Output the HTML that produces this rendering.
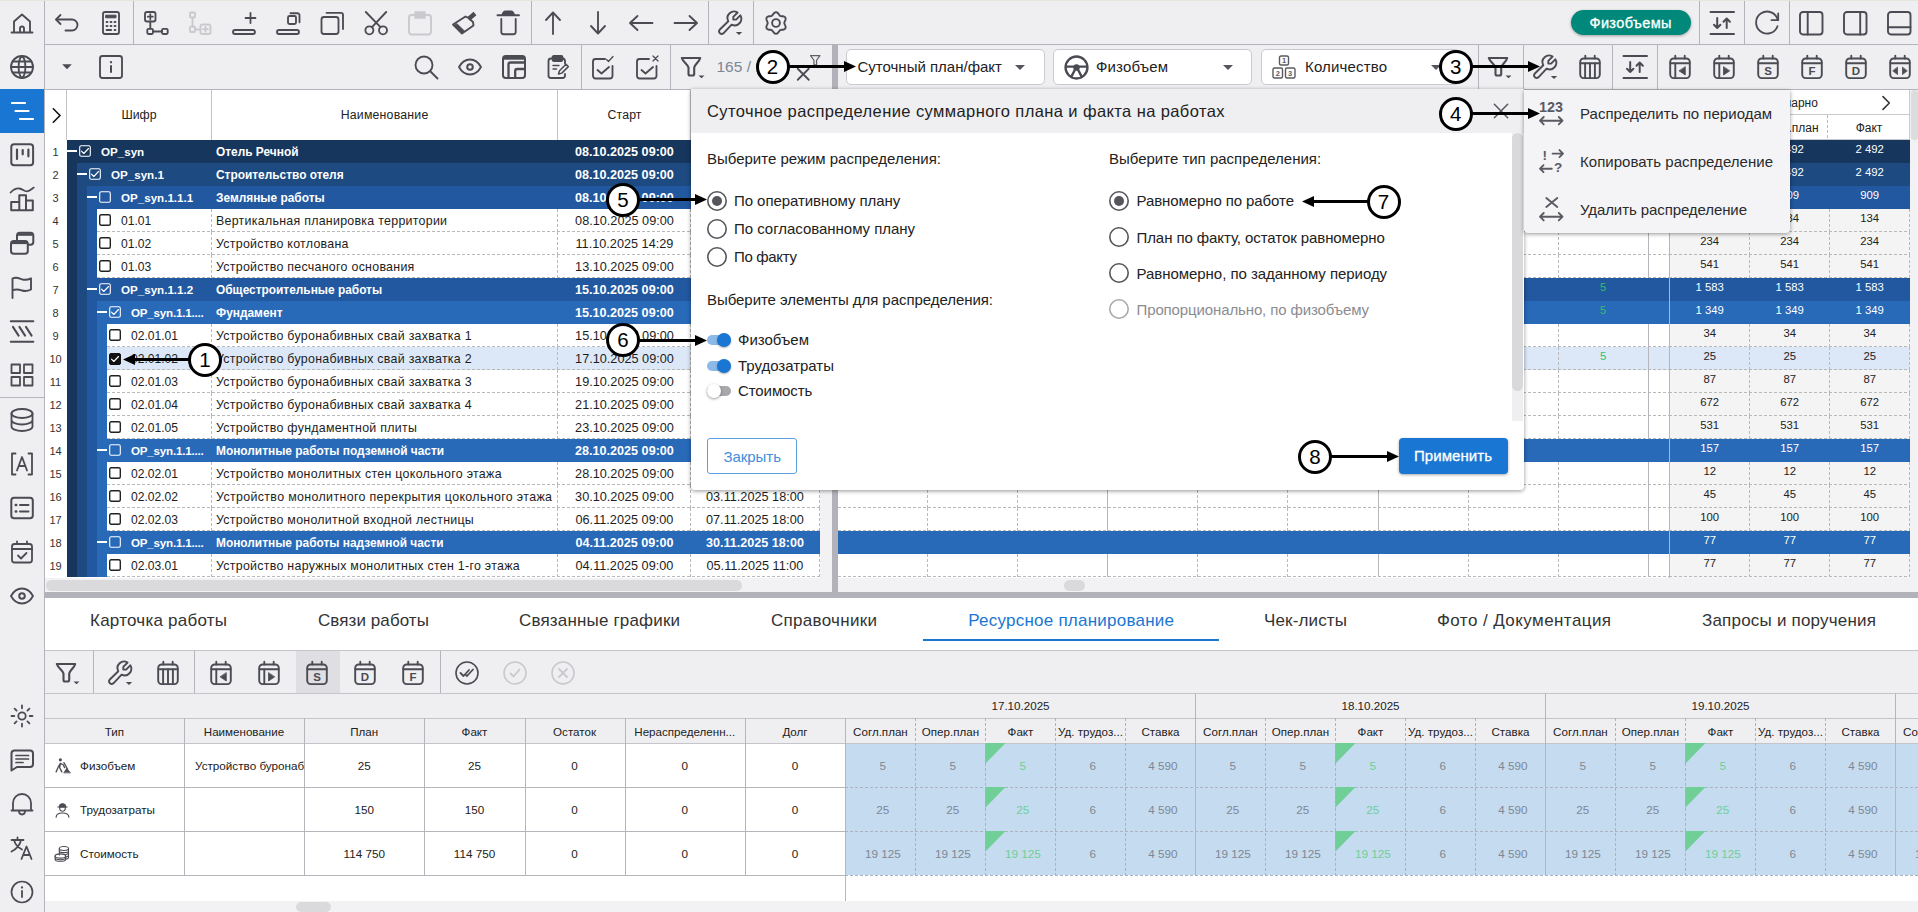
<!DOCTYPE html><html><head><meta charset="utf-8"><title>UI</title><style>
html,body{margin:0;padding:0}
body{width:1918px;height:912px;overflow:hidden;position:relative;background:#efeff2;font-family:"Liberation Sans",sans-serif;}
.t{position:absolute;white-space:nowrap;}
.b{position:absolute;box-sizing:border-box;}
.i{position:absolute;overflow:visible;}
.circ{position:absolute;box-sizing:border-box;width:34px;height:34px;border:3px solid #000;border-radius:50%;background:#fff;color:#000;font-size:20.5px;line-height:28px;text-align:center;}
</style></head><body>
<div class="b" style="left:0px;top:0px;width:1918px;height:1px;background:#e3e8dc;"></div>
<div class="b" style="left:0px;top:1px;width:44px;height:911px;background:#efeff2;"></div>
<div class="b" style="left:44px;top:1px;width:1px;height:911px;background:#b4b4bc;"></div>
<div class="b" style="left:0px;top:89px;width:44px;height:44px;background:#1976d2;"></div>
<svg class="i" style="left:10.0px;top:11.0px;" width="24" height="24" viewBox="0 0 24 24" fill="none" stroke="#4b4b53" stroke-width="1.85" stroke-linecap="round" stroke-linejoin="round"><path d="M1.5 21.5h21M4 21V10.5L12 3.5l8 7V21"/><path d="M10 21v-3.5a2 2 0 0 1 4 0V21"/></svg>
<svg class="i" style="left:10.0px;top:55.0px;" width="24" height="24" viewBox="0 0 24 24" fill="none" stroke="#4b4b53" stroke-width="1.85" stroke-linecap="round" stroke-linejoin="round"><circle cx="12" cy="12" r="11"/><path d="M1 12h22M2.800 6.500h18.400M2.800 17.500h18.400M12 1c-4.500 3.500-4.500 18.500 0 22M12 1c4.500 3.500 4.500 18.500 0 22"/></svg>
<svg class="i" style="left:10.0px;top:99.0px;" width="24" height="24" viewBox="0 0 24 24" fill="none" stroke="#fff" stroke-width="1.85" stroke-linecap="round" stroke-linejoin="round"><path d="M2 4h13M5.500 12h13M10 20h13" stroke-width="2.200"/></svg>
<svg class="i" style="left:10.0px;top:143.0px;" width="24" height="24" viewBox="0 0 24 24" fill="none" stroke="#4b4b53" stroke-width="1.85" stroke-linecap="round" stroke-linejoin="round"><rect x="1.300" y="1.300" width="21.800" height="21" rx="2.800" stroke-width="2"/><path d="M7 6.500v9.500M12.700 7v4.300M18.400 6.500v6.800" stroke-width="2.200"/></svg>
<svg class="i" style="left:10.0px;top:187.0px;" width="24" height="24" viewBox="0 0 24 24" fill="none" stroke="#4b4b53" stroke-width="1.85" stroke-linecap="round" stroke-linejoin="round"><path d="M1.200 23.200V14.900H9.300V23.200M9.300 14.900V8.200H16V23.200M16 13.600H22.800V23.200M1.200 23.200H22.800" stroke-width="2"/><path d="M.600 5.500C3 3 6 1.200 9.300 1.500S14 4.500 17 4.300 21.500 2 23.800 .600" stroke-width="1.800"/></svg>
<svg class="i" style="left:10.0px;top:231.0px;" width="24" height="24" viewBox="0 0 24 24" fill="none" stroke="#4b4b53" stroke-width="1.85" stroke-linecap="round" stroke-linejoin="round"><rect x="1" y="10" width="16.800" height="12.800" rx="2.800" stroke-width="2"/><path d="M2 11.800h15" stroke-width="2.600" stroke-linecap="butt"/><path d="M7 9.500V4.500a2.800 2.800 0 0 1 2.800-2.800h10.700a2.800 2.800 0 0 1 2.800 2.800v6.400a2.800 2.800 0 0 1-2.800 2.800H18.500" stroke-width="2"/><path d="M8 3.500h14.500" stroke-width="2.600" stroke-linecap="butt"/></svg>
<svg class="i" style="left:10.0px;top:275.0px;" width="24" height="24" viewBox="0 0 24 24" fill="none" stroke="#4b4b53" stroke-width="1.85" stroke-linecap="round" stroke-linejoin="round"><path d="M2.500 23V3.500c4-2 7 0 9.500.800s6 .500 9-1V14.500c-3 1.500-6 2-9 1s-5.500-2-9.500 0" stroke-width="1.900"/></svg>
<svg class="i" style="left:10.0px;top:319.0px;" width="24" height="24" viewBox="0 0 24 24" fill="none" stroke="#4b4b53" stroke-width="1.85" stroke-linecap="round" stroke-linejoin="round"><path d="M.800 2.200h22.500M.800 22.800h22.500" stroke-width="2.100"/><path d="M3 8l5.500 8.500M9.500 8l5.500 8.500M16 8l5.500 8.500" stroke-width="2.200"/></svg>
<svg class="i" style="left:10.0px;top:363.0px;" width="24" height="24" viewBox="0 0 24 24" fill="none" stroke="#4b4b53" stroke-width="1.85" stroke-linecap="round" stroke-linejoin="round"><rect x="1.500" y="1.500" width="8.500" height="8.500" stroke-width="1.800"/><rect x="14" y="1.500" width="8.500" height="8.500" stroke-width="1.800"/><rect x="1.500" y="14" width="8.500" height="8.500" stroke-width="1.800"/><rect x="14" y="14" width="8.500" height="8.500" stroke-width="1.800"/></svg>
<svg class="i" style="left:10.0px;top:408.0px;" width="24" height="24" viewBox="0 0 24 24" fill="none" stroke="#4b4b53" stroke-width="1.85" stroke-linecap="round" stroke-linejoin="round"><ellipse cx="12" cy="5.500" rx="10.500" ry="4.500" stroke-width="1.800"/><path d="M1.500 5.500v13c0 2.500 4.700 4.500 10.500 4.500s10.500-2 10.500-4.500v-13M1.500 12c0 2.500 4.700 4.500 10.500 4.500s10.500-2 10.500-4.500" stroke-width="1.800"/></svg>
<svg class="i" style="left:10.0px;top:452.0px;" width="24" height="24" viewBox="0 0 24 24" fill="none" stroke="#4b4b53" stroke-width="1.85" stroke-linecap="round" stroke-linejoin="round"><path d="M5.500 1.500H2v21h3.500M18.500 1.500H22v21h-3.500" stroke-width="1.800"/><path d="M7 18.500L12 5l5 13.500M8.800 14h6.400" stroke-width="1.800"/></svg>
<svg class="i" style="left:10.0px;top:496.0px;" width="24" height="24" viewBox="0 0 24 24" fill="none" stroke="#4b4b53" stroke-width="1.85" stroke-linecap="round" stroke-linejoin="round"><rect x="1.300" y="1.800" width="21.500" height="20.500" rx="2.800" stroke-width="2"/><path d="M10 9h8.500M10 15.500h8.500" stroke-width="2"/><path d="M5.800 9h.400M5.800 15.500h.400" stroke-width="2.600"/></svg>
<svg class="i" style="left:10.0px;top:540.0px;" width="24" height="24" viewBox="0 0 24 24" fill="none" stroke="#4b4b53" stroke-width="1.85" stroke-linecap="round" stroke-linejoin="round"><rect x="2" y="4" width="20" height="18.500" rx="2.500" stroke-width="1.800"/><path d="M2 9h20M7 1.500V4M17 1.500V4" stroke-width="1.800"/><path d="M8 15.500l3 3 5.500-5.500" stroke-width="1.800"/></svg>
<svg class="i" style="left:10.0px;top:584.0px;" width="24" height="24" viewBox="0 0 24 24" fill="none" stroke="#4b4b53" stroke-width="1.85" stroke-linecap="round" stroke-linejoin="round"><path d="M1 12C4 6.500 8 4.500 12 4.500S20 6.500 23 12c-3 5.500-7 7.500-11 7.500S4 17.500 1 12z"/><circle cx="12" cy="12" r="2.800" stroke-width="2"/></svg>
<svg class="i" style="left:10.0px;top:704.0px;" width="24" height="24" viewBox="0 0 24 24" fill="none" stroke="#4b4b53" stroke-width="1.85" stroke-linecap="round" stroke-linejoin="round"><circle cx="12" cy="12" r="3.700" stroke-width="1.800"/><path d="M12 1.500v2.800M12 19.700v2.800M1.500 12h2.800M19.700 12h2.800M4.600 4.600l2 2M17.400 17.400l2 2M19.400 4.600l-2 2M6.600 17.400l-2 2" stroke-width="1.800"/></svg>
<svg class="i" style="left:10.0px;top:748.0px;" width="24" height="24" viewBox="0 0 24 24" fill="none" stroke="#4b4b53" stroke-width="1.85" stroke-linecap="round" stroke-linejoin="round"><path d="M4 2.500h16a3 3 0 0 1 3 3V16a3 3 0 0 1-3 3H7L1.500 22.500V5.500a3 3 0 0 1 2.500-3z" stroke-width="2"/><path d="M6 7.500h12.500M6 11h12.500M6 14.500h7" stroke-width="1.700"/></svg>
<svg class="i" style="left:10.0px;top:792.0px;" width="24" height="24" viewBox="0 0 24 24" fill="none" stroke="#4b4b53" stroke-width="1.85" stroke-linecap="round" stroke-linejoin="round"><path d="M3 18.500V11a9 9 0 0 1 18 0v7.500zM1.500 18.500h21M9 19c0 2 1.300 3.500 3 3.500s3-1.500 3-3.500" stroke-width="1.800"/></svg>
<svg class="i" style="left:10.0px;top:836.0px;" width="24" height="24" viewBox="0 0 24 24" fill="none" stroke="#4b4b53" stroke-width="1.85" stroke-linecap="round" stroke-linejoin="round"><path d="M1.500 4h12M7.500 1.500V4M11 4c-1 5-4.500 9-9.500 11.500M4 4c1 4 4 7.500 8 9.500" stroke-width="1.800"/><path d="M11.500 23l5-12.500 5 12.500M13.300 19h6.400" stroke-width="1.800"/></svg>
<svg class="i" style="left:10.0px;top:880.0px;" width="24" height="24" viewBox="0 0 24 24" fill="none" stroke="#4b4b53" stroke-width="1.85" stroke-linecap="round" stroke-linejoin="round"><circle cx="12" cy="12" r="10.500" stroke-width="1.700"/><path d="M12 11v6" stroke-width="1.800"/><path d="M12 7.300v.3" stroke-width="2.200"/></svg>
<div class="b" style="left:0px;top:397px;width:44px;height:1px;background:#b4b4bc;"></div>
<div class="b" style="left:45px;top:44px;width:1873px;height:1px;background:#b4b4bc;"></div>
<div class="b" style="left:45px;top:89px;width:1873px;height:1px;background:#b4b4bc;"></div>
<svg class="i" style="left:55.0px;top:11.0px;" width="24" height="24" viewBox="0 0 24 24" fill="none" stroke="#4b4b53" stroke-width="1.85" stroke-linecap="round" stroke-linejoin="round"><path d="M5.500 4L1 8.500l4.500 4.500"/><path d="M1.500 8.500h15.500a5.500 5.500 0 0 1 0 11h-6.500"/></svg>
<svg class="i" style="left:99.0px;top:11.0px;" width="24" height="24" viewBox="0 0 24 24" fill="none" stroke="#4b4b53" stroke-width="1.85" stroke-linecap="round" stroke-linejoin="round"><rect x="4" y="1" width="16" height="22" rx="2"/><rect x="7" y="4.2" width="10" height="2.6" fill="#4b4b53" stroke-width="1"/><path d="M7.6 11h.8M11.6 11h.8M15.6 11h.8M7.6 15h.8M11.6 15h.8M15.6 15h.8M7.6 19h4.5M15.6 19h.8" stroke-width="2"/></svg>
<svg class="i" style="left:143.5px;top:11.0px;" width="24" height="24" viewBox="0 0 24 24" fill="none" stroke="#4b4b53" stroke-width="1.85" stroke-linecap="round" stroke-linejoin="round"><rect x="1" y="1" width="10.500" height="9.500" rx="2"/><path d="M3.800 5.700h5M6.300 3.200v5" stroke-width="1.800"/><path d="M6.300 10.500v7M9 20.500h9"/><rect x="3.300" y="17.800" width="5.700" height="5.200" rx="1.200"/><rect x="18" y="17.800" width="5.700" height="5.200" rx="1.200"/></svg>
<svg class="i" style="left:188.0px;top:11.0px;" width="24" height="24" viewBox="0 0 24 24" fill="none" stroke="#c9c9ce" stroke-width="1.85" stroke-linecap="round" stroke-linejoin="round"><rect x="2" y="1.5" width="5" height="5" rx="1"/><path d="M4.5 6.5v9M7 18.5h5"/><rect x="2" y="15.5" width="5" height="5.5" rx="1"/><rect x="12.5" y="13.5" width="10" height="9.5" rx="2"/><path d="M15 18.2h5M17.5 15.7v5" stroke-width="1.8"/></svg>
<svg class="i" style="left:232.0px;top:11.0px;" width="24" height="24" viewBox="0 0 24 24" fill="none" stroke="#4b4b53" stroke-width="1.85" stroke-linecap="round" stroke-linejoin="round"><rect x="1" y="19" width="22" height="4" rx="2"/><path d="M13.5 7h10M18.5 2v10" stroke-width="1.8"/></svg>
<svg class="i" style="left:276.0px;top:11.0px;" width="24" height="24" viewBox="0 0 24 24" fill="none" stroke="#4b4b53" stroke-width="1.85" stroke-linecap="round" stroke-linejoin="round"><rect x="1" y="19" width="22" height="4" rx="2"/><rect x="12" y="5" width="8" height="8" rx="1.5"/><path d="M14.5 2.2h7a2 2 0 0 1 2 2v7"/></svg>
<svg class="i" style="left:320.0px;top:11.0px;" width="24" height="24" viewBox="0 0 24 24" fill="none" stroke="#4b4b53" stroke-width="1.85" stroke-linecap="round" stroke-linejoin="round"><rect x="1.5" y="6" width="17" height="17" rx="2.5"/><path d="M6.5 1.8H21a2 2 0 0 1 2 2V18"/></svg>
<svg class="i" style="left:364.0px;top:11.0px;" width="24" height="24" viewBox="0 0 24 24" fill="none" stroke="#4b4b53" stroke-width="1.85" stroke-linecap="round" stroke-linejoin="round"><circle cx="5.400" cy="19.300" r="4"/><circle cx="19" cy="19.300" r="4"/><path d="M1.800 1L16.500 16.200M22.200 1L8 16.200"/></svg>
<svg class="i" style="left:408.0px;top:11.0px;" width="24" height="24" viewBox="0 0 24 24" fill="none" stroke="#c9c9ce" stroke-width="1.85" stroke-linecap="round" stroke-linejoin="round"><path d="M7 4H3.500a2.500 2.500 0 0 0-2.500 2.500V21a2.500 2.500 0 0 0 2.500 2.500h17A2.500 2.500 0 0 0 23 21V6.500A2.500 2.500 0 0 0 20.500 4H17"/><rect x="6.300" y=".300" width="11.400" height="7.400" fill="#c9c9ce" stroke="none"/></svg>
<svg class="i" style="left:452.0px;top:11.0px;" width="24" height="24" viewBox="0 0 24 24" fill="none" stroke="#4b4b53" stroke-width="1.85" stroke-linecap="round" stroke-linejoin="round"><path d="M13.500 5.500L1 13.500l9 9 11.500-8-.500-3.500-4.500-4z"/><path d="M16.500 8l6.500-5.500" stroke-width="4.400" stroke-linecap="butt"/><path d="M2.200 14.800l7.300 7.300 3-2-7.500-7.300z" fill="#4b4b53" stroke-width="1"/></svg>
<svg class="i" style="left:496.0px;top:11.0px;" width="24" height="24" viewBox="0 0 24 24" fill="none" stroke="#4b4b53" stroke-width="1.85" stroke-linecap="round" stroke-linejoin="round"><path d="M1.500 4.200h21.500"/><path d="M6.500 4c0-2 1.500-3.500 3-3.500h5.500c1.500 0 3 1.500 3 3.500z" fill="#4b4b53"/><path d="M5.300 8v13a2.200 2.200 0 0 0 2.200 2.200h10a2.200 2.200 0 0 0 2.200-2.200V8"/></svg>
<svg class="i" style="left:541.0px;top:11.0px;" width="24" height="24" viewBox="0 0 24 24" fill="none" stroke="#4b4b53" stroke-width="1.85" stroke-linecap="round" stroke-linejoin="round"><path d="M12 23V2M5 9l7-7.5L19 9"/></svg>
<svg class="i" style="left:585.5px;top:11.0px;" width="24" height="24" viewBox="0 0 24 24" fill="none" stroke="#4b4b53" stroke-width="1.85" stroke-linecap="round" stroke-linejoin="round"><path d="M12 1v21M5 15l7 7.5 7-7.5"/></svg>
<svg class="i" style="left:629.0px;top:11.0px;" width="24" height="24" viewBox="0 0 24 24" fill="none" stroke="#4b4b53" stroke-width="1.85" stroke-linecap="round" stroke-linejoin="round"><path d="M23.5 12H1.5M8.5 5L1 12l7.5 7"/></svg>
<svg class="i" style="left:673.5px;top:11.0px;" width="24" height="24" viewBox="0 0 24 24" fill="none" stroke="#4b4b53" stroke-width="1.85" stroke-linecap="round" stroke-linejoin="round"><path d="M0.5 12h22M15.5 5l7.5 7-7.5 7"/></svg>
<svg class="i" style="left:718.0px;top:11.0px;" width="24" height="24" viewBox="0 0 24 24" fill="none" stroke="#4b4b53" stroke-width="1.85" stroke-linecap="round" stroke-linejoin="round"><path d="M19.600 1.500L15.300 5.800V8.600H18.100L22.300 4.300A6.600 6.600 0 0 1 13.600 13.600L5.400 22.300A2.600 2.600 0 0 1 1.600 18.800L10.300 10.200A6.600 6.600 0 0 1 19.600 1.500Z" stroke-width="1.900"/><path d="M17.800 21h6.400l-3.200 2.900z" fill="#4b4b53" stroke="none"/></svg>
<svg class="i" style="left:763.5px;top:11.0px;" width="24" height="24" viewBox="0 0 24 24" fill="none" stroke="#4b4b53" stroke-width="1.85" stroke-linecap="round" stroke-linejoin="round"><circle cx="12" cy="12" r="3.900" stroke-width="1.900"/><path d="M12.0 1.2L12.9 1.4L13.8 2.0L14.5 2.8L15.1 3.6L15.6 4.3L16.1 4.8L16.9 5.1L17.7 5.2L18.8 5.2L19.8 5.5L20.7 5.9L21.4 6.6L21.6 7.5L21.6 8.5L21.2 9.5L20.8 10.5L20.4 11.3L20.3 12.0L20.4 12.7L20.8 13.5L21.2 14.5L21.6 15.5L21.6 16.5L21.4 17.4L20.7 18.1L19.8 18.5L18.8 18.8L17.7 18.8L16.9 18.9L16.1 19.2L15.6 19.7L15.1 20.4L14.5 21.2L13.8 22.0L12.9 22.6L12.0 22.8L11.1 22.6L10.2 22.0L9.5 21.2L8.9 20.4L8.4 19.7L7.8 19.2L7.1 18.9L6.3 18.8L5.2 18.8L4.2 18.5L3.3 18.1L2.6 17.4L2.4 16.5L2.4 15.5L2.8 14.5L3.2 13.5L3.6 12.7L3.7 12.0L3.6 11.3L3.2 10.5L2.8 9.5L2.4 8.5L2.4 7.5L2.6 6.6L3.3 5.9L4.2 5.5L5.2 5.2L6.3 5.2L7.1 5.1L7.8 4.8L8.4 4.3L8.9 3.6L9.5 2.8L10.2 2.0L11.1 1.4Z" stroke-width="1.900"/></svg>
<div class="b" style="left:133px;top:1px;width:1px;height:43px;background:#b4b4bc;"></div>
<div class="b" style="left:531px;top:1px;width:1px;height:43px;background:#b4b4bc;"></div>
<div class="b" style="left:708px;top:1px;width:1px;height:43px;background:#b4b4bc;"></div>
<div class="b" style="left:753px;top:1px;width:1px;height:43px;background:#b4b4bc;"></div>
<div class="b" style="left:1571px;top:10px;width:120px;height:25px;background:#00897b;border-radius:13px;box-shadow:0 1px 3px rgba(0,0,0,.35);"></div>
<div class="t" style="left:1589.5px;top:12.5px;font-size:14.5px;line-height:20px;color:#fff;letter-spacing:0.37px;-webkit-text-stroke:0.300px #fff;">Физобъемы</div>
<div class="b" style="left:1699px;top:1px;width:1px;height:43px;background:#b4b4bc;"></div>
<div class="b" style="left:1744px;top:1px;width:1px;height:43px;background:#b4b4bc;"></div>
<div class="b" style="left:1789px;top:1px;width:1px;height:43px;background:#b4b4bc;"></div>
<svg class="i" style="left:1710.0px;top:11.0px;" width="24" height="24" viewBox="0 0 24 24" fill="none" stroke="#4b4b53" stroke-width="1.85" stroke-linecap="round" stroke-linejoin="round"><path d="M0.500 1h23.500M0.500 23h23.500" stroke-width="2"/><path d="M7.200 7v10M4 13.800l3.200 3.200 3.200-3.200M16.700 17V7.500M13.500 10.700l3.200-3.200 3.200 3.200" stroke-width="2"/></svg>
<svg class="i" style="left:1755.0px;top:11.0px;" width="24" height="24" viewBox="0 0 24 24" fill="none" stroke="#4b4b53" stroke-width="1.85" stroke-linecap="round" stroke-linejoin="round"><path d="M22.500 15.200A11 11 0 1 1 22.800 9" stroke-width="1.800"/><path d="M23.200 2.500v6.700h-6.700" stroke-width="1.800"/></svg>
<svg class="i" style="left:1799.0px;top:11.0px;" width="24" height="24" viewBox="0 0 24 24" fill="none" stroke="#4b4b53" stroke-width="1.85" stroke-linecap="round" stroke-linejoin="round"><rect x="1" y="1" width="22.500" height="22.500" rx="3" stroke-width="1.900"/><path d="M8.700 1v22.500" stroke-width="1.900"/></svg>
<svg class="i" style="left:1843.0px;top:11.0px;" width="24" height="24" viewBox="0 0 24 24" fill="none" stroke="#4b4b53" stroke-width="1.85" stroke-linecap="round" stroke-linejoin="round"><rect x="1" y="1" width="22.500" height="22.500" rx="3" stroke-width="1.900"/><path d="M17.200 1v22.500" stroke-width="1.900"/></svg>
<svg class="i" style="left:1887.0px;top:11.0px;" width="24" height="24" viewBox="0 0 24 24" fill="none" stroke="#4b4b53" stroke-width="1.85" stroke-linecap="round" stroke-linejoin="round"><rect x="1" y="1" width="22.500" height="22.500" rx="3" stroke-width="1.900"/><path d="M1 16.300h22.500" stroke-width="1.900"/></svg>
<svg class="i" style="left:55.0px;top:55.0px;" width="24" height="24" viewBox="0 0 24 24" fill="none" stroke="#4b4b53" stroke-width="1.85" stroke-linecap="round" stroke-linejoin="round"><path d="M7.200 9.300h9.600l-4.800 5z" fill="#4b4b53" stroke="none"/></svg>
<svg class="i" style="left:99.0px;top:55.0px;" width="24" height="24" viewBox="0 0 24 24" fill="none" stroke="#4b4b53" stroke-width="1.85" stroke-linecap="round" stroke-linejoin="round"><rect x="1" y="1" width="22" height="22" rx="2.500"/><path d="M12 11v6" stroke-width="2"/><path d="M12 7v.3" stroke-width="2.200"/></svg>
<svg class="i" style="left:414.0px;top:55.0px;" width="24" height="24" viewBox="0 0 24 24" fill="none" stroke="#4b4b53" stroke-width="1.85" stroke-linecap="round" stroke-linejoin="round"><circle cx="10" cy="10" r="8.500"/><path d="M16.500 16.500L23.500 23.500"/></svg>
<svg class="i" style="left:458.0px;top:55.0px;" width="24" height="24" viewBox="0 0 24 24" fill="none" stroke="#4b4b53" stroke-width="1.85" stroke-linecap="round" stroke-linejoin="round"><path d="M1 12C4 6.500 8 4.500 12 4.500S20 6.500 23 12c-3 5.500-7 7.500-11 7.500S4 17.500 1 12z"/><circle cx="12" cy="12" r="2.800" stroke-width="2"/></svg>
<svg class="i" style="left:502.0px;top:55.0px;" width="24" height="24" viewBox="0 0 24 24" fill="none" stroke="#4b4b53" stroke-width="1.85" stroke-linecap="round" stroke-linejoin="round"><rect x="1" y="1" width="22" height="22" rx="2.800" stroke-width="2"/><path d="M2 3.300h20" stroke-width="2.800" stroke-linecap="butt"/><path d="M6.500 22.500V9.500a2 2 0 0 1 2-2H22.500" stroke-width="2.300"/><path d="M13.200 22.500v-6.500a2 2 0 0 1 2-2h7.300" stroke-width="2.300"/></svg>
<svg class="i" style="left:546.0px;top:55.0px;" width="24" height="24" viewBox="0 0 24 24" fill="none" stroke="#4b4b53" stroke-width="1.85" stroke-linecap="round" stroke-linejoin="round"><path d="M7 3.500H5a2.500 2.500 0 0 0-2.500 2.500v14.500A2.500 2.500 0 0 0 5 23h11.500a2.500 2.500 0 0 0 2.500-2.500V19M17 3.500h-.0M17 3.500a2.500 2.500 0 0 1 2 2.500v2.500"/><rect x="6.500" y="1" width="10" height="5" rx="1.200" fill="#4b4b53"/><path d="M7 10.500h6M7 14h3.500" stroke-width="1.400"/><path d="M12.500 19l1-3.200 6.500-6.500 2.300 2.300-6.500 6.500z" stroke-width="1.500"/></svg>
<svg class="i" style="left:590.5px;top:55.0px;" width="24" height="24" viewBox="0 0 24 24" fill="none" stroke="#4b4b53" stroke-width="1.85" stroke-linecap="round" stroke-linejoin="round"><path d="M14 4H4.500A2.500 2.500 0 0 0 2 6.500V21a2.500 2.500 0 0 0 2.500 2.500H19A2.500 2.500 0 0 0 21.500 21V11"/><path d="M6.500 15l4 3.500L18 12"/><path d="M15.500 4.500l2 2L22 1.500" stroke-width="1.300"/></svg>
<svg class="i" style="left:635.0px;top:55.0px;" width="24" height="24" viewBox="0 0 24 24" fill="none" stroke="#4b4b53" stroke-width="1.85" stroke-linecap="round" stroke-linejoin="round"><path d="M14 4H4.500A2.500 2.500 0 0 0 2 6.500V21a2.500 2.500 0 0 0 2.500 2.500H19A2.500 2.500 0 0 0 21.500 21V11"/><path d="M6.500 15l4 3.500L18 12"/><path d="M18 1l5 5M23 1l-5 5" stroke-width="1.300"/></svg>
<div class="b" style="left:581px;top:45px;width:1px;height:44px;background:#b4b4bc;"></div>
<div class="b" style="left:670px;top:45px;width:1px;height:44px;background:#b4b4bc;"></div>
<svg class="i" style="left:680.0px;top:55.0px;" width="24" height="24" viewBox="0 0 24 24" fill="none" stroke="#4b4b53" stroke-width="1.85" stroke-linecap="round" stroke-linejoin="round"><path d="M1.800 3h18.400c-1 4-5.500 6.500-6 9.500v6.500c0 1-1 1.500-1.800 1.500H10c-.800 0-1.500-.600-1.500-1.500V12.500c-.500-3-5.500-5.500-6.700-9.500z" stroke-width="2.100"/><path d="M18.500 20.500h6l-3 2.800z" fill="#4b4b53" stroke="none"/></svg>
<div class="t" style="left:716.5px;top:55.5px;font-size:15.5px;line-height:22px;color:#7b8797;">165 / 165</div>
<svg class="i" style="left:794.8px;top:65.5px;" width="16.5" height="16.5" viewBox="0 0 24 24" fill="none" stroke="#4b4b53" stroke-width="2.6" stroke-linecap="round" stroke-linejoin="round"><path d="M4 4l16 16M20 4L4 20"/></svg>
<svg class="i" style="left:809.2px;top:54.2px;" width="12.5" height="12.5" viewBox="0 0 24 24" fill="none" stroke="#5f5f67" stroke-width="1.85" stroke-linecap="round" stroke-linejoin="round"><path d="M3 3h18l-6.500 9v9h-5v-9z" stroke-width="2.400"/></svg>
<div class="b" style="left:832px;top:45px;width:6px;height:547px;background:#b2b2ba;"></div>
<div class="b" style="left:846px;top:49px;width:199px;height:36px;background:#fff;border:1px solid #c9c9cf;border-radius:5px;"></div>
<div class="t" style="left:857.5px;top:56.0px;font-size:15px;line-height:21px;color:#222;">Суточный план/факт</div>
<div class="b" style="left:1015px;top:65px;width:0;height:0;border-left:5px solid transparent;border-right:5px solid transparent;border-top:5px solid #55555d;"></div>
<div class="b" style="left:1053px;top:49px;width:199px;height:36px;background:#fff;border:1px solid #c9c9cf;border-radius:5px;"></div>
<div class="t" style="left:1096.0px;top:56.0px;font-size:15px;line-height:21px;color:#222;letter-spacing:0.15px;">Физобъем</div>
<div class="b" style="left:1223px;top:65px;width:0;height:0;border-left:5px solid transparent;border-right:5px solid transparent;border-top:5px solid #55555d;"></div>
<svg class="i" style="left:1063.5px;top:54.5px;" width="25" height="25" viewBox="0 0 24 24" fill="none" stroke="#4b4b53" stroke-width="1.85" stroke-linecap="round" stroke-linejoin="round"><circle cx="12" cy="12" r="10.500" stroke-width="2.300"/><circle cx="12" cy="12" r="2.600" fill="#4b4b53" stroke-width="1"/><path d="M2 11.200h7.500M14.500 11.200H22M10.500 14.200l-3.300 6.300M13.500 14.200l3.300 6.300" stroke-width="2.300"/></svg>
<div class="b" style="left:1261px;top:49px;width:199px;height:36px;background:#fff;border:1px solid #c9c9cf;border-radius:5px;"></div>
<div class="t" style="left:1305.0px;top:56.0px;font-size:15px;line-height:21px;color:#222;letter-spacing:0.16px;">Количество</div>
<div class="b" style="left:1431px;top:65px;width:0;height:0;border-left:5px solid transparent;border-right:5px solid transparent;border-top:5px solid #55555d;"></div>
<svg class="i" style="left:1272.0px;top:55.0px;" width="24" height="24" viewBox="0 0 24 24" fill="none" stroke="#5a5a62" stroke-width="1.85" stroke-linecap="round" stroke-linejoin="round"><rect x="7.500" y="1" width="9" height="9" rx="1.500" stroke-width="1.400"/><rect x="1" y="13" width="9.500" height="10" rx="1.500" stroke-width="1.400"/><rect x="13.500" y="13" width="9.500" height="10" rx="1.500" stroke-width="1.400"/><text x="12" y="8.300" text-anchor="middle" font-family="Liberation Sans, sans-serif" font-size="7.500" fill="#5a5a62" stroke="none" font-weight="bold">1</text><text x="5.800" y="21" text-anchor="middle" font-family="Liberation Sans, sans-serif" font-size="7.500" fill="#5a5a62" stroke="none" font-weight="bold">2</text><text x="18.200" y="21" text-anchor="middle" font-family="Liberation Sans, sans-serif" font-size="7.500" fill="#5a5a62" stroke="none" font-weight="bold">3</text></svg>
<div class="b" style="left:1478px;top:45px;width:1px;height:44px;background:#b4b4bc;"></div>
<div class="b" style="left:1523px;top:45px;width:1px;height:44px;background:#b4b4bc;"></div>
<div class="b" style="left:1612px;top:45px;width:1px;height:44px;background:#b4b4bc;"></div>
<div class="b" style="left:1657px;top:45px;width:1px;height:44px;background:#b4b4bc;"></div>
<svg class="i" style="left:1487.0px;top:55.0px;" width="24" height="24" viewBox="0 0 24 24" fill="none" stroke="#4b4b53" stroke-width="1.85" stroke-linecap="round" stroke-linejoin="round"><path d="M1.800 3h18.400c-1 4-5.500 6.500-6 9.500v6.500c0 1-1 1.500-1.800 1.500H10c-.800 0-1.500-.600-1.500-1.500V12.500c-.500-3-5.500-5.500-6.700-9.500z" stroke-width="2.100"/><path d="M18.500 20.500h6l-3 2.800z" fill="#4b4b53" stroke="none"/></svg>
<svg class="i" style="left:1533.0px;top:55.0px;" width="24" height="24" viewBox="0 0 24 24" fill="none" stroke="#4b4b53" stroke-width="1.85" stroke-linecap="round" stroke-linejoin="round"><path d="M19.600 1.500L15.300 5.800V8.600H18.100L22.300 4.300A6.600 6.600 0 0 1 13.600 13.600L5.400 22.300A2.600 2.600 0 0 1 1.600 18.800L10.300 10.200A6.600 6.600 0 0 1 19.600 1.500Z" stroke-width="1.900"/><path d="M17.800 21h6.400l-3.200 2.900z" fill="#4b4b53" stroke="none"/></svg>
<svg class="i" style="left:1577.5px;top:55.0px;" width="24" height="24" viewBox="0 0 24 24" fill="none" stroke="#4b4b53" stroke-width="1.85" stroke-linecap="round" stroke-linejoin="round"><rect x="2.200" y="3.500" width="19.600" height="19.600" rx="3.500" stroke-width="1.900"/><path d="M2.500 8.300h19M7.300 .800v2.700M16.700 .800v2.700" stroke-width="1.900"/><path d="M7.100 8.500v14.500M12 8.500v14.500M16.900 8.500v14.500" stroke-width="1.900"/></svg>
<svg class="i" style="left:1622.8px;top:55.0px;" width="24" height="24" viewBox="0 0 24 24" fill="none" stroke="#4b4b53" stroke-width="1.85" stroke-linecap="round" stroke-linejoin="round"><path d="M0.500 1h23.500M0.500 23h23.500" stroke-width="2"/><path d="M7.200 7v10M4 13.800l3.200 3.200 3.200-3.200M16.700 17V7.500M13.500 10.700l3.200-3.200 3.200 3.200" stroke-width="2"/></svg>
<svg class="i" style="left:1668.0px;top:55.0px;" width="24" height="24" viewBox="0 0 24 24" fill="none" stroke="#4b4b53" stroke-width="1.85" stroke-linecap="round" stroke-linejoin="round"><rect x="2.200" y="3.500" width="19.600" height="19.600" rx="3.500" stroke-width="1.900"/><path d="M2.500 8.300h19M7.300 .800v2.700M16.700 .800v2.700" stroke-width="1.900"/><path d="M7.300 8.500v14.500" stroke-width="1.900"/><path d="M17.300 12v8l-6-4z" fill="#4b4b53" stroke-width="0.800"/></svg>
<svg class="i" style="left:1712.0px;top:55.0px;" width="24" height="24" viewBox="0 0 24 24" fill="none" stroke="#4b4b53" stroke-width="1.85" stroke-linecap="round" stroke-linejoin="round"><rect x="2.200" y="3.500" width="19.600" height="19.600" rx="3.500" stroke-width="1.900"/><path d="M2.500 8.300h19M7.300 .800v2.700M16.700 .800v2.700" stroke-width="1.900"/><path d="M7.300 8.500v14.500" stroke-width="1.900"/><path d="M11.500 12v8l6-4z" fill="#4b4b53" stroke-width="0.800"/></svg>
<svg class="i" style="left:1756.0px;top:55.0px;" width="24" height="24" viewBox="0 0 24 24" fill="none" stroke="#4b4b53" stroke-width="1.85" stroke-linecap="round" stroke-linejoin="round"><rect x="2.200" y="3.500" width="19.600" height="19.600" rx="3.500" stroke-width="1.900"/><path d="M2.500 8.300h19M7.300 .800v2.700M16.700 .800v2.700" stroke-width="1.900"/><text x="12" y="20" text-anchor="middle" font-family="Liberation Sans, sans-serif" font-weight="bold" font-size="11.500" fill="#4b4b53" stroke="none">S</text></svg>
<svg class="i" style="left:1800.0px;top:55.0px;" width="24" height="24" viewBox="0 0 24 24" fill="none" stroke="#4b4b53" stroke-width="1.85" stroke-linecap="round" stroke-linejoin="round"><rect x="2.200" y="3.500" width="19.600" height="19.600" rx="3.500" stroke-width="1.900"/><path d="M2.500 8.300h19M7.300 .800v2.700M16.700 .800v2.700" stroke-width="1.900"/><text x="12" y="20" text-anchor="middle" font-family="Liberation Sans, sans-serif" font-weight="bold" font-size="11.500" fill="#4b4b53" stroke="none">F</text></svg>
<svg class="i" style="left:1844.0px;top:55.0px;" width="24" height="24" viewBox="0 0 24 24" fill="none" stroke="#4b4b53" stroke-width="1.85" stroke-linecap="round" stroke-linejoin="round"><rect x="2.200" y="3.500" width="19.600" height="19.600" rx="3.500" stroke-width="1.900"/><path d="M2.500 8.300h19M7.300 .800v2.700M16.700 .800v2.700" stroke-width="1.900"/><text x="12" y="20" text-anchor="middle" font-family="Liberation Sans, sans-serif" font-weight="bold" font-size="11.500" fill="#4b4b53" stroke="none">D</text></svg>
<svg class="i" style="left:1888.0px;top:55.0px;" width="24" height="24" viewBox="0 0 24 24" fill="none" stroke="#4b4b53" stroke-width="1.85" stroke-linecap="round" stroke-linejoin="round"><rect x="2.200" y="3.500" width="19.600" height="19.600" rx="3.500" stroke-width="1.900"/><path d="M2.500 8.300h19M7.300 .800v2.700M16.700 .800v2.700" stroke-width="1.900"/><path d="M9.500 12.500v7l-4.500-3.500z" fill="#4b4b53" stroke-width="0.800"/><path d="M14.500 12.500v7l4.500-3.500z" fill="#4b4b53" stroke-width="0.800"/></svg>
<div class="b" style="left:45px;top:90px;width:787px;height:488px;background:#fff;"></div>
<svg class="i" style="left:47.5px;top:106.5px;" width="17" height="17" viewBox="0 0 24 24" fill="none" stroke="#111" stroke-width="1.8" stroke-linecap="round" stroke-linejoin="round"><path d="M7.500 2.500l9.500 9.500-9.500 9.500" stroke-width="2.300"/></svg>
<div class="b" style="left:66px;top:90px;width:1px;height:50px;background:#c2c2c8;"></div>
<div class="b" style="left:211px;top:90px;width:1px;height:50px;background:#c2c2c8;"></div>
<div class="b" style="left:557px;top:90px;width:1px;height:50px;background:#c2c2c8;"></div>
<div class="b" style="left:690px;top:90px;width:1px;height:50px;background:#c2c2c8;"></div>
<div class="t" style="left:121.5px;top:106.5px;font-size:12.3px;line-height:17px;color:#222;letter-spacing:-0.03px;">Шифр</div>
<div class="t" style="left:340.7px;top:106.5px;font-size:12.3px;line-height:17px;color:#222;letter-spacing:0.21px;">Наименование</div>
<div class="t" style="left:607.5px;top:106.5px;font-size:12.3px;line-height:17px;color:#222;letter-spacing:0.14px;">Старт</div>
<div class="t" style="left:52.4px;top:145.3px;font-size:11px;line-height:15px;color:#333;">1</div>
<div class="b" style="left:67px;top:140px;width:753px;height:23px;background:#17365d;"></div>
<div class="b" style="left:67px;top:150.0px;width:9.5px;height:2px;background:#fff;"></div>
<svg class="i" style="left:79px;top:145.0px" width="12" height="12" viewBox="0 0 12 12"><rect x="0.700" y="0.700" width="10.600" height="10.600" rx="1.500" fill="none" stroke="#fff" stroke-width="1.1"/><path d="M2.500 6.200l2.300 2.300 4.700-5" fill="none" stroke="#fff" stroke-width="1.150" stroke-linecap="round" stroke-linejoin="round"/></svg>
<div class="t" style="left:101.0px;top:143.5px;font-size:11.6px;line-height:16px;color:#fff;font-weight:bold;">OP_syn</div>
<div class="t" style="left:216.0px;top:143.5px;font-size:11.9px;line-height:16px;color:#fff;font-weight:bold;">Отель Речной</div>
<div class="t" style="left:575.1px;top:143.5px;font-size:12.6px;line-height:16px;color:#fff;font-weight:bold;">08.10.2025 09:00</div>
<div class="t" style="left:52.4px;top:168.3px;font-size:11px;line-height:15px;color:#333;">2</div>
<div class="b" style="left:67px;top:163px;width:10px;height:23px;background:#17365d;"></div>
<div class="b" style="left:77px;top:163px;width:743px;height:23px;background:#1d4a80;"></div>
<div class="b" style="left:77px;top:173.0px;width:9.5px;height:2px;background:#fff;"></div>
<svg class="i" style="left:89px;top:168.0px" width="12" height="12" viewBox="0 0 12 12"><rect x="0.700" y="0.700" width="10.600" height="10.600" rx="1.500" fill="none" stroke="#fff" stroke-width="1.1"/><path d="M2.500 6.200l2.300 2.300 4.700-5" fill="none" stroke="#fff" stroke-width="1.150" stroke-linecap="round" stroke-linejoin="round"/></svg>
<div class="t" style="left:111.0px;top:166.5px;font-size:11.6px;line-height:16px;color:#fff;font-weight:bold;">OP_syn.1</div>
<div class="t" style="left:216.0px;top:166.5px;font-size:11.9px;line-height:16px;color:#fff;font-weight:bold;">Строительство отеля</div>
<div class="t" style="left:575.1px;top:166.5px;font-size:12.6px;line-height:16px;color:#fff;font-weight:bold;">08.10.2025 09:00</div>
<div class="t" style="left:52.4px;top:191.3px;font-size:11px;line-height:15px;color:#333;">3</div>
<div class="b" style="left:67px;top:186px;width:10px;height:23px;background:#17365d;"></div>
<div class="b" style="left:77px;top:186px;width:10px;height:23px;background:#1d4a80;"></div>
<div class="b" style="left:87px;top:186px;width:733px;height:23px;background:#21589f;"></div>
<div class="b" style="left:87px;top:196.0px;width:9.5px;height:2px;background:#fff;"></div>
<svg class="i" style="left:99px;top:191.0px" width="12" height="12" viewBox="0 0 12 12"><rect x="0.700" y="0.700" width="10.600" height="10.600" rx="1.500" fill="none" stroke="#fff" stroke-width="1.1"/></svg>
<div class="t" style="left:121.0px;top:189.5px;font-size:11.6px;line-height:16px;color:#fff;font-weight:bold;">OP_syn.1.1.1</div>
<div class="t" style="left:216.0px;top:189.5px;font-size:11.9px;line-height:16px;color:#fff;font-weight:bold;">Земляные работы</div>
<div class="t" style="left:575.1px;top:189.5px;font-size:12.6px;line-height:16px;color:#fff;font-weight:bold;">08.10.2025 09:00</div>
<div class="t" style="left:52.4px;top:214.3px;font-size:11px;line-height:15px;color:#333;">4</div>
<div class="b" style="left:67px;top:209px;width:10px;height:23px;background:#17365d;"></div>
<div class="b" style="left:77px;top:209px;width:10px;height:23px;background:#1d4a80;"></div>
<div class="b" style="left:87px;top:209px;width:10px;height:23px;background:#21589f;"></div>
<svg class="i" style="left:99px;top:214.0px" width="12" height="12" viewBox="0 0 12 12"><rect x="0.700" y="0.700" width="10.600" height="10.600" rx="1.500" fill="none" stroke="#222" stroke-width="1.4"/></svg>
<div class="t" style="left:121.0px;top:212.5px;font-size:12.1px;line-height:16px;color:#1d1d1d;">01.01</div>
<div class="t" style="left:216.0px;top:212.5px;font-size:12.4px;line-height:16px;color:#1d1d1d;letter-spacing:0.28px;">Вертикальная планировка территории</div>
<div class="t" style="left:575.1px;top:212.5px;font-size:12.7px;line-height:16px;color:#1d1d1d;">08.10.2025 09:00</div>
<div class="b" style="left:97px;top:231px;width:723px;height:1px;background:repeating-linear-gradient(90deg,#b9b9b9 0 3px,transparent 3px 5px);"></div>
<div class="t" style="left:52.4px;top:237.3px;font-size:11px;line-height:15px;color:#333;">5</div>
<div class="b" style="left:67px;top:232px;width:10px;height:23px;background:#17365d;"></div>
<div class="b" style="left:77px;top:232px;width:10px;height:23px;background:#1d4a80;"></div>
<div class="b" style="left:87px;top:232px;width:10px;height:23px;background:#21589f;"></div>
<svg class="i" style="left:99px;top:237.0px" width="12" height="12" viewBox="0 0 12 12"><rect x="0.700" y="0.700" width="10.600" height="10.600" rx="1.500" fill="none" stroke="#222" stroke-width="1.4"/></svg>
<div class="t" style="left:121.0px;top:235.5px;font-size:12.1px;line-height:16px;color:#1d1d1d;">01.02</div>
<div class="t" style="left:216.0px;top:235.5px;font-size:12.4px;line-height:16px;color:#1d1d1d;letter-spacing:0.28px;">Устройство котлована</div>
<div class="t" style="left:575.5px;top:235.5px;font-size:12.7px;line-height:16px;color:#1d1d1d;">11.10.2025 14:29</div>
<div class="b" style="left:97px;top:254px;width:723px;height:1px;background:repeating-linear-gradient(90deg,#b9b9b9 0 3px,transparent 3px 5px);"></div>
<div class="t" style="left:52.4px;top:260.3px;font-size:11px;line-height:15px;color:#333;">6</div>
<div class="b" style="left:67px;top:255px;width:10px;height:23px;background:#17365d;"></div>
<div class="b" style="left:77px;top:255px;width:10px;height:23px;background:#1d4a80;"></div>
<div class="b" style="left:87px;top:255px;width:10px;height:23px;background:#21589f;"></div>
<svg class="i" style="left:99px;top:260.0px" width="12" height="12" viewBox="0 0 12 12"><rect x="0.700" y="0.700" width="10.600" height="10.600" rx="1.500" fill="none" stroke="#222" stroke-width="1.4"/></svg>
<div class="t" style="left:121.0px;top:258.5px;font-size:12.1px;line-height:16px;color:#1d1d1d;">01.03</div>
<div class="t" style="left:216.0px;top:258.5px;font-size:12.4px;line-height:16px;color:#1d1d1d;letter-spacing:0.28px;">Устройство песчаного основания</div>
<div class="t" style="left:575.1px;top:258.5px;font-size:12.7px;line-height:16px;color:#1d1d1d;">13.10.2025 09:00</div>
<div class="b" style="left:97px;top:277px;width:723px;height:1px;background:repeating-linear-gradient(90deg,#b9b9b9 0 3px,transparent 3px 5px);"></div>
<div class="t" style="left:52.4px;top:283.3px;font-size:11px;line-height:15px;color:#333;">7</div>
<div class="b" style="left:67px;top:278px;width:10px;height:23px;background:#17365d;"></div>
<div class="b" style="left:77px;top:278px;width:10px;height:23px;background:#1d4a80;"></div>
<div class="b" style="left:87px;top:278px;width:733px;height:23px;background:#21589f;"></div>
<div class="b" style="left:87px;top:288.0px;width:9.5px;height:2px;background:#fff;"></div>
<svg class="i" style="left:99px;top:283.0px" width="12" height="12" viewBox="0 0 12 12"><rect x="0.700" y="0.700" width="10.600" height="10.600" rx="1.500" fill="none" stroke="#fff" stroke-width="1.1"/><path d="M2.500 6.200l2.300 2.300 4.700-5" fill="none" stroke="#fff" stroke-width="1.150" stroke-linecap="round" stroke-linejoin="round"/></svg>
<div class="t" style="left:121.0px;top:281.5px;font-size:11.6px;line-height:16px;color:#fff;font-weight:bold;">OP_syn.1.1.2</div>
<div class="t" style="left:216.0px;top:281.5px;font-size:11.9px;line-height:16px;color:#fff;font-weight:bold;">Общестроительные работы</div>
<div class="t" style="left:575.1px;top:281.5px;font-size:12.6px;line-height:16px;color:#fff;font-weight:bold;">15.10.2025 09:00</div>
<div class="t" style="left:52.4px;top:306.3px;font-size:11px;line-height:15px;color:#333;">8</div>
<div class="b" style="left:67px;top:301px;width:10px;height:23px;background:#17365d;"></div>
<div class="b" style="left:77px;top:301px;width:10px;height:23px;background:#1d4a80;"></div>
<div class="b" style="left:87px;top:301px;width:10px;height:23px;background:#21589f;"></div>
<div class="b" style="left:97px;top:301px;width:723px;height:23px;background:#2869b8;"></div>
<div class="b" style="left:97px;top:311.0px;width:9.5px;height:2px;background:#fff;"></div>
<svg class="i" style="left:109px;top:306.0px" width="12" height="12" viewBox="0 0 12 12"><rect x="0.700" y="0.700" width="10.600" height="10.600" rx="1.500" fill="none" stroke="#fff" stroke-width="1.1"/><path d="M2.500 6.200l2.300 2.300 4.700-5" fill="none" stroke="#fff" stroke-width="1.150" stroke-linecap="round" stroke-linejoin="round"/></svg>
<div class="t" style="left:131.0px;top:304.5px;font-size:11.6px;line-height:16px;color:#fff;letter-spacing:-0.21px;font-weight:bold;">OP_syn.1.1....</div>
<div class="t" style="left:216.0px;top:304.5px;font-size:11.9px;line-height:16px;color:#fff;font-weight:bold;">Фундамент</div>
<div class="t" style="left:575.1px;top:304.5px;font-size:12.6px;line-height:16px;color:#fff;font-weight:bold;">15.10.2025 09:00</div>
<div class="t" style="left:52.4px;top:329.3px;font-size:11px;line-height:15px;color:#333;">9</div>
<div class="b" style="left:67px;top:324px;width:10px;height:23px;background:#17365d;"></div>
<div class="b" style="left:77px;top:324px;width:10px;height:23px;background:#1d4a80;"></div>
<div class="b" style="left:87px;top:324px;width:10px;height:23px;background:#21589f;"></div>
<div class="b" style="left:97px;top:324px;width:10px;height:23px;background:#2869b8;"></div>
<svg class="i" style="left:109px;top:329.0px" width="12" height="12" viewBox="0 0 12 12"><rect x="0.700" y="0.700" width="10.600" height="10.600" rx="1.500" fill="none" stroke="#222" stroke-width="1.4"/></svg>
<div class="t" style="left:131.0px;top:327.5px;font-size:12.1px;line-height:16px;color:#1d1d1d;">02.01.01</div>
<div class="t" style="left:216.0px;top:327.5px;font-size:12.4px;line-height:16px;color:#1d1d1d;letter-spacing:0.28px;">Устройство буронабивных свай захватка 1</div>
<div class="t" style="left:575.1px;top:327.5px;font-size:12.7px;line-height:16px;color:#1d1d1d;">15.10.2025 09:00</div>
<div class="b" style="left:107px;top:346px;width:713px;height:1px;background:repeating-linear-gradient(90deg,#b9b9b9 0 3px,transparent 3px 5px);"></div>
<div class="t" style="left:49.4px;top:352.3px;font-size:11px;line-height:15px;color:#333;">10</div>
<div class="b" style="left:67px;top:347px;width:10px;height:23px;background:#17365d;"></div>
<div class="b" style="left:77px;top:347px;width:10px;height:23px;background:#1d4a80;"></div>
<div class="b" style="left:87px;top:347px;width:10px;height:23px;background:#21589f;"></div>
<div class="b" style="left:97px;top:347px;width:10px;height:23px;background:#2869b8;"></div>
<div class="b" style="left:107px;top:347px;width:713px;height:23px;background:#dce8f8;"></div>
<svg class="i" style="left:109px;top:352.5px" width="12" height="12" viewBox="0 0 12 12"><rect x="0.500" y="0.500" width="11" height="11" rx="1.500" fill="#111" stroke="#111"/><path d="M2.500 6.200l2.300 2.300 4.700-5" fill="none" stroke="#fff" stroke-width="1.150" stroke-linecap="round" stroke-linejoin="round"/></svg>
<div class="t" style="left:131.0px;top:350.5px;font-size:12.1px;line-height:16px;color:#1d1d1d;">02.01.02</div>
<div class="t" style="left:216.0px;top:350.5px;font-size:12.4px;line-height:16px;color:#1d1d1d;letter-spacing:0.28px;">Устройство буронабивных свай захватка 2</div>
<div class="t" style="left:575.1px;top:350.5px;font-size:12.7px;line-height:16px;color:#1d1d1d;">17.10.2025 09:00</div>
<div class="b" style="left:107px;top:369px;width:713px;height:1px;background:repeating-linear-gradient(90deg,#b9b9b9 0 3px,transparent 3px 5px);"></div>
<div class="t" style="left:49.8px;top:375.3px;font-size:11px;line-height:15px;color:#333;">11</div>
<div class="b" style="left:67px;top:370px;width:10px;height:23px;background:#17365d;"></div>
<div class="b" style="left:77px;top:370px;width:10px;height:23px;background:#1d4a80;"></div>
<div class="b" style="left:87px;top:370px;width:10px;height:23px;background:#21589f;"></div>
<div class="b" style="left:97px;top:370px;width:10px;height:23px;background:#2869b8;"></div>
<svg class="i" style="left:109px;top:375.0px" width="12" height="12" viewBox="0 0 12 12"><rect x="0.700" y="0.700" width="10.600" height="10.600" rx="1.500" fill="none" stroke="#222" stroke-width="1.4"/></svg>
<div class="t" style="left:131.0px;top:373.5px;font-size:12.1px;line-height:16px;color:#1d1d1d;">02.01.03</div>
<div class="t" style="left:216.0px;top:373.5px;font-size:12.4px;line-height:16px;color:#1d1d1d;letter-spacing:0.28px;">Устройство буронабивных свай захватка 3</div>
<div class="t" style="left:575.1px;top:373.5px;font-size:12.7px;line-height:16px;color:#1d1d1d;">19.10.2025 09:00</div>
<div class="b" style="left:107px;top:392px;width:713px;height:1px;background:repeating-linear-gradient(90deg,#b9b9b9 0 3px,transparent 3px 5px);"></div>
<div class="t" style="left:49.4px;top:398.3px;font-size:11px;line-height:15px;color:#333;">12</div>
<div class="b" style="left:67px;top:393px;width:10px;height:23px;background:#17365d;"></div>
<div class="b" style="left:77px;top:393px;width:10px;height:23px;background:#1d4a80;"></div>
<div class="b" style="left:87px;top:393px;width:10px;height:23px;background:#21589f;"></div>
<div class="b" style="left:97px;top:393px;width:10px;height:23px;background:#2869b8;"></div>
<svg class="i" style="left:109px;top:398.0px" width="12" height="12" viewBox="0 0 12 12"><rect x="0.700" y="0.700" width="10.600" height="10.600" rx="1.500" fill="none" stroke="#222" stroke-width="1.4"/></svg>
<div class="t" style="left:131.0px;top:396.5px;font-size:12.1px;line-height:16px;color:#1d1d1d;">02.01.04</div>
<div class="t" style="left:216.0px;top:396.5px;font-size:12.4px;line-height:16px;color:#1d1d1d;letter-spacing:0.28px;">Устройство буронабивных свай захватка 4</div>
<div class="t" style="left:575.1px;top:396.5px;font-size:12.7px;line-height:16px;color:#1d1d1d;">21.10.2025 09:00</div>
<div class="b" style="left:107px;top:415px;width:713px;height:1px;background:repeating-linear-gradient(90deg,#b9b9b9 0 3px,transparent 3px 5px);"></div>
<div class="t" style="left:49.4px;top:421.3px;font-size:11px;line-height:15px;color:#333;">13</div>
<div class="b" style="left:67px;top:416px;width:10px;height:23px;background:#17365d;"></div>
<div class="b" style="left:77px;top:416px;width:10px;height:23px;background:#1d4a80;"></div>
<div class="b" style="left:87px;top:416px;width:10px;height:23px;background:#21589f;"></div>
<div class="b" style="left:97px;top:416px;width:10px;height:23px;background:#2869b8;"></div>
<svg class="i" style="left:109px;top:421.0px" width="12" height="12" viewBox="0 0 12 12"><rect x="0.700" y="0.700" width="10.600" height="10.600" rx="1.500" fill="none" stroke="#222" stroke-width="1.4"/></svg>
<div class="t" style="left:131.0px;top:419.5px;font-size:12.1px;line-height:16px;color:#1d1d1d;">02.01.05</div>
<div class="t" style="left:216.0px;top:419.5px;font-size:12.4px;line-height:16px;color:#1d1d1d;letter-spacing:0.28px;">Устройство фундаментной плиты</div>
<div class="t" style="left:575.1px;top:419.5px;font-size:12.7px;line-height:16px;color:#1d1d1d;">23.10.2025 09:00</div>
<div class="b" style="left:107px;top:438px;width:713px;height:1px;background:repeating-linear-gradient(90deg,#b9b9b9 0 3px,transparent 3px 5px);"></div>
<div class="t" style="left:49.4px;top:444.3px;font-size:11px;line-height:15px;color:#333;">14</div>
<div class="b" style="left:67px;top:439px;width:10px;height:23px;background:#17365d;"></div>
<div class="b" style="left:77px;top:439px;width:10px;height:23px;background:#1d4a80;"></div>
<div class="b" style="left:87px;top:439px;width:10px;height:23px;background:#21589f;"></div>
<div class="b" style="left:97px;top:439px;width:723px;height:23px;background:#2869b8;"></div>
<div class="b" style="left:97px;top:449.0px;width:9.5px;height:2px;background:#fff;"></div>
<svg class="i" style="left:109px;top:444.0px" width="12" height="12" viewBox="0 0 12 12"><rect x="0.700" y="0.700" width="10.600" height="10.600" rx="1.500" fill="none" stroke="#fff" stroke-width="1.1"/></svg>
<div class="t" style="left:131.0px;top:442.5px;font-size:11.6px;line-height:16px;color:#fff;letter-spacing:-0.21px;font-weight:bold;">OP_syn.1.1....</div>
<div class="t" style="left:216.0px;top:442.5px;font-size:11.9px;line-height:16px;color:#fff;font-weight:bold;">Монолитные работы подземной части</div>
<div class="t" style="left:575.1px;top:442.5px;font-size:12.6px;line-height:16px;color:#fff;font-weight:bold;">28.10.2025 09:00</div>
<div class="t" style="left:49.4px;top:467.3px;font-size:11px;line-height:15px;color:#333;">15</div>
<div class="b" style="left:67px;top:462px;width:10px;height:23px;background:#17365d;"></div>
<div class="b" style="left:77px;top:462px;width:10px;height:23px;background:#1d4a80;"></div>
<div class="b" style="left:87px;top:462px;width:10px;height:23px;background:#21589f;"></div>
<div class="b" style="left:97px;top:462px;width:10px;height:23px;background:#2869b8;"></div>
<svg class="i" style="left:109px;top:467.0px" width="12" height="12" viewBox="0 0 12 12"><rect x="0.700" y="0.700" width="10.600" height="10.600" rx="1.500" fill="none" stroke="#222" stroke-width="1.4"/></svg>
<div class="t" style="left:131.0px;top:465.5px;font-size:12.1px;line-height:16px;color:#1d1d1d;">02.02.01</div>
<div class="t" style="left:216.0px;top:465.5px;font-size:12.4px;line-height:16px;color:#1d1d1d;letter-spacing:0.30px;">Устройство монолитных стен цокольного этажа</div>
<div class="t" style="left:575.1px;top:465.5px;font-size:12.7px;line-height:16px;color:#1d1d1d;">28.10.2025 09:00</div>
<div class="b" style="left:107px;top:484px;width:713px;height:1px;background:repeating-linear-gradient(90deg,#b9b9b9 0 3px,transparent 3px 5px);"></div>
<div class="t" style="left:49.4px;top:490.3px;font-size:11px;line-height:15px;color:#333;">16</div>
<div class="b" style="left:67px;top:485px;width:10px;height:23px;background:#17365d;"></div>
<div class="b" style="left:77px;top:485px;width:10px;height:23px;background:#1d4a80;"></div>
<div class="b" style="left:87px;top:485px;width:10px;height:23px;background:#21589f;"></div>
<div class="b" style="left:97px;top:485px;width:10px;height:23px;background:#2869b8;"></div>
<svg class="i" style="left:109px;top:490.0px" width="12" height="12" viewBox="0 0 12 12"><rect x="0.700" y="0.700" width="10.600" height="10.600" rx="1.500" fill="none" stroke="#222" stroke-width="1.4"/></svg>
<div class="t" style="left:131.0px;top:488.5px;font-size:12.1px;line-height:16px;color:#1d1d1d;">02.02.02</div>
<div class="t" style="left:216.0px;top:488.5px;font-size:12.4px;line-height:16px;color:#1d1d1d;letter-spacing:0.36px;">Устройство монолитного перекрытия цокольного этажа</div>
<div class="t" style="left:575.1px;top:488.5px;font-size:12.7px;line-height:16px;color:#1d1d1d;">30.10.2025 09:00</div>
<div class="t" style="left:706.0px;top:488.5px;font-size:12.7px;line-height:16px;color:#1d1d1d;">03.11.2025 18:00</div>
<div class="b" style="left:107px;top:507px;width:713px;height:1px;background:repeating-linear-gradient(90deg,#b9b9b9 0 3px,transparent 3px 5px);"></div>
<div class="t" style="left:49.4px;top:513.3px;font-size:11px;line-height:15px;color:#333;">17</div>
<div class="b" style="left:67px;top:508px;width:10px;height:23px;background:#17365d;"></div>
<div class="b" style="left:77px;top:508px;width:10px;height:23px;background:#1d4a80;"></div>
<div class="b" style="left:87px;top:508px;width:10px;height:23px;background:#21589f;"></div>
<div class="b" style="left:97px;top:508px;width:10px;height:23px;background:#2869b8;"></div>
<svg class="i" style="left:109px;top:513.0px" width="12" height="12" viewBox="0 0 12 12"><rect x="0.700" y="0.700" width="10.600" height="10.600" rx="1.500" fill="none" stroke="#222" stroke-width="1.4"/></svg>
<div class="t" style="left:131.0px;top:511.5px;font-size:12.1px;line-height:16px;color:#1d1d1d;">02.02.03</div>
<div class="t" style="left:216.0px;top:511.5px;font-size:12.4px;line-height:16px;color:#1d1d1d;letter-spacing:0.28px;">Устройство монолитной входной лестницы</div>
<div class="t" style="left:575.5px;top:511.5px;font-size:12.7px;line-height:16px;color:#1d1d1d;">06.11.2025 09:00</div>
<div class="t" style="left:706.0px;top:511.5px;font-size:12.7px;line-height:16px;color:#1d1d1d;">07.11.2025 18:00</div>
<div class="b" style="left:107px;top:530px;width:713px;height:1px;background:repeating-linear-gradient(90deg,#b9b9b9 0 3px,transparent 3px 5px);"></div>
<div class="t" style="left:49.4px;top:536.3px;font-size:11px;line-height:15px;color:#333;">18</div>
<div class="b" style="left:67px;top:531px;width:10px;height:23px;background:#17365d;"></div>
<div class="b" style="left:77px;top:531px;width:10px;height:23px;background:#1d4a80;"></div>
<div class="b" style="left:87px;top:531px;width:10px;height:23px;background:#21589f;"></div>
<div class="b" style="left:97px;top:531px;width:723px;height:23px;background:#2869b8;"></div>
<div class="b" style="left:97px;top:541.0px;width:9.5px;height:2px;background:#fff;"></div>
<svg class="i" style="left:109px;top:536.0px" width="12" height="12" viewBox="0 0 12 12"><rect x="0.700" y="0.700" width="10.600" height="10.600" rx="1.500" fill="none" stroke="#fff" stroke-width="1.1"/></svg>
<div class="t" style="left:131.0px;top:534.5px;font-size:11.6px;line-height:16px;color:#fff;letter-spacing:-0.21px;font-weight:bold;">OP_syn.1.1....</div>
<div class="t" style="left:216.0px;top:534.5px;font-size:11.9px;line-height:16px;color:#fff;font-weight:bold;">Монолитные работы надземной части</div>
<div class="t" style="left:575.5px;top:534.5px;font-size:12.6px;line-height:16px;color:#fff;font-weight:bold;">04.11.2025 09:00</div>
<div class="t" style="left:706.0px;top:534.5px;font-size:12.6px;line-height:16px;color:#fff;font-weight:bold;">30.11.2025 18:00</div>
<div class="t" style="left:49.4px;top:559.3px;font-size:11px;line-height:15px;color:#333;">19</div>
<div class="b" style="left:67px;top:554px;width:10px;height:23px;background:#17365d;"></div>
<div class="b" style="left:77px;top:554px;width:10px;height:23px;background:#1d4a80;"></div>
<div class="b" style="left:87px;top:554px;width:10px;height:23px;background:#21589f;"></div>
<div class="b" style="left:97px;top:554px;width:10px;height:23px;background:#2869b8;"></div>
<svg class="i" style="left:109px;top:559.0px" width="12" height="12" viewBox="0 0 12 12"><rect x="0.700" y="0.700" width="10.600" height="10.600" rx="1.500" fill="none" stroke="#222" stroke-width="1.4"/></svg>
<div class="t" style="left:131.0px;top:557.5px;font-size:12.1px;line-height:16px;color:#1d1d1d;">02.03.01</div>
<div class="t" style="left:216.0px;top:557.5px;font-size:12.4px;line-height:16px;color:#1d1d1d;letter-spacing:0.28px;">Устройство наружных монолитных стен 1-го этажа</div>
<div class="t" style="left:575.5px;top:557.5px;font-size:12.7px;line-height:16px;color:#1d1d1d;">04.11.2025 09:00</div>
<div class="t" style="left:706.5px;top:557.5px;font-size:12.7px;line-height:16px;color:#1d1d1d;">05.11.2025 11:00</div>
<div class="b" style="left:107px;top:576px;width:713px;height:1px;background:repeating-linear-gradient(90deg,#b9b9b9 0 3px,transparent 3px 5px);"></div>
<div class="b" style="left:211px;top:209px;width:1px;height:23px;background:repeating-linear-gradient(180deg,#b9b9b9 0 3px,transparent 3px 5px);"></div>
<div class="b" style="left:557px;top:209px;width:1px;height:23px;background:repeating-linear-gradient(180deg,#b9b9b9 0 3px,transparent 3px 5px);"></div>
<div class="b" style="left:690px;top:209px;width:1px;height:23px;background:repeating-linear-gradient(180deg,#b9b9b9 0 3px,transparent 3px 5px);"></div>
<div class="b" style="left:819px;top:209px;width:1px;height:23px;background:repeating-linear-gradient(180deg,#b9b9b9 0 3px,transparent 3px 5px);"></div>
<div class="b" style="left:211px;top:232px;width:1px;height:23px;background:repeating-linear-gradient(180deg,#b9b9b9 0 3px,transparent 3px 5px);"></div>
<div class="b" style="left:557px;top:232px;width:1px;height:23px;background:repeating-linear-gradient(180deg,#b9b9b9 0 3px,transparent 3px 5px);"></div>
<div class="b" style="left:690px;top:232px;width:1px;height:23px;background:repeating-linear-gradient(180deg,#b9b9b9 0 3px,transparent 3px 5px);"></div>
<div class="b" style="left:819px;top:232px;width:1px;height:23px;background:repeating-linear-gradient(180deg,#b9b9b9 0 3px,transparent 3px 5px);"></div>
<div class="b" style="left:211px;top:255px;width:1px;height:23px;background:repeating-linear-gradient(180deg,#b9b9b9 0 3px,transparent 3px 5px);"></div>
<div class="b" style="left:557px;top:255px;width:1px;height:23px;background:repeating-linear-gradient(180deg,#b9b9b9 0 3px,transparent 3px 5px);"></div>
<div class="b" style="left:690px;top:255px;width:1px;height:23px;background:repeating-linear-gradient(180deg,#b9b9b9 0 3px,transparent 3px 5px);"></div>
<div class="b" style="left:819px;top:255px;width:1px;height:23px;background:repeating-linear-gradient(180deg,#b9b9b9 0 3px,transparent 3px 5px);"></div>
<div class="b" style="left:211px;top:324px;width:1px;height:23px;background:repeating-linear-gradient(180deg,#b9b9b9 0 3px,transparent 3px 5px);"></div>
<div class="b" style="left:557px;top:324px;width:1px;height:23px;background:repeating-linear-gradient(180deg,#b9b9b9 0 3px,transparent 3px 5px);"></div>
<div class="b" style="left:690px;top:324px;width:1px;height:23px;background:repeating-linear-gradient(180deg,#b9b9b9 0 3px,transparent 3px 5px);"></div>
<div class="b" style="left:819px;top:324px;width:1px;height:23px;background:repeating-linear-gradient(180deg,#b9b9b9 0 3px,transparent 3px 5px);"></div>
<div class="b" style="left:211px;top:347px;width:1px;height:23px;background:repeating-linear-gradient(180deg,#b9b9b9 0 3px,transparent 3px 5px);"></div>
<div class="b" style="left:557px;top:347px;width:1px;height:23px;background:repeating-linear-gradient(180deg,#b9b9b9 0 3px,transparent 3px 5px);"></div>
<div class="b" style="left:690px;top:347px;width:1px;height:23px;background:repeating-linear-gradient(180deg,#b9b9b9 0 3px,transparent 3px 5px);"></div>
<div class="b" style="left:819px;top:347px;width:1px;height:23px;background:repeating-linear-gradient(180deg,#b9b9b9 0 3px,transparent 3px 5px);"></div>
<div class="b" style="left:211px;top:370px;width:1px;height:23px;background:repeating-linear-gradient(180deg,#b9b9b9 0 3px,transparent 3px 5px);"></div>
<div class="b" style="left:557px;top:370px;width:1px;height:23px;background:repeating-linear-gradient(180deg,#b9b9b9 0 3px,transparent 3px 5px);"></div>
<div class="b" style="left:690px;top:370px;width:1px;height:23px;background:repeating-linear-gradient(180deg,#b9b9b9 0 3px,transparent 3px 5px);"></div>
<div class="b" style="left:819px;top:370px;width:1px;height:23px;background:repeating-linear-gradient(180deg,#b9b9b9 0 3px,transparent 3px 5px);"></div>
<div class="b" style="left:211px;top:393px;width:1px;height:23px;background:repeating-linear-gradient(180deg,#b9b9b9 0 3px,transparent 3px 5px);"></div>
<div class="b" style="left:557px;top:393px;width:1px;height:23px;background:repeating-linear-gradient(180deg,#b9b9b9 0 3px,transparent 3px 5px);"></div>
<div class="b" style="left:690px;top:393px;width:1px;height:23px;background:repeating-linear-gradient(180deg,#b9b9b9 0 3px,transparent 3px 5px);"></div>
<div class="b" style="left:819px;top:393px;width:1px;height:23px;background:repeating-linear-gradient(180deg,#b9b9b9 0 3px,transparent 3px 5px);"></div>
<div class="b" style="left:211px;top:416px;width:1px;height:23px;background:repeating-linear-gradient(180deg,#b9b9b9 0 3px,transparent 3px 5px);"></div>
<div class="b" style="left:557px;top:416px;width:1px;height:23px;background:repeating-linear-gradient(180deg,#b9b9b9 0 3px,transparent 3px 5px);"></div>
<div class="b" style="left:690px;top:416px;width:1px;height:23px;background:repeating-linear-gradient(180deg,#b9b9b9 0 3px,transparent 3px 5px);"></div>
<div class="b" style="left:819px;top:416px;width:1px;height:23px;background:repeating-linear-gradient(180deg,#b9b9b9 0 3px,transparent 3px 5px);"></div>
<div class="b" style="left:211px;top:462px;width:1px;height:23px;background:repeating-linear-gradient(180deg,#b9b9b9 0 3px,transparent 3px 5px);"></div>
<div class="b" style="left:557px;top:462px;width:1px;height:23px;background:repeating-linear-gradient(180deg,#b9b9b9 0 3px,transparent 3px 5px);"></div>
<div class="b" style="left:690px;top:462px;width:1px;height:23px;background:repeating-linear-gradient(180deg,#b9b9b9 0 3px,transparent 3px 5px);"></div>
<div class="b" style="left:819px;top:462px;width:1px;height:23px;background:repeating-linear-gradient(180deg,#b9b9b9 0 3px,transparent 3px 5px);"></div>
<div class="b" style="left:211px;top:485px;width:1px;height:23px;background:repeating-linear-gradient(180deg,#b9b9b9 0 3px,transparent 3px 5px);"></div>
<div class="b" style="left:557px;top:485px;width:1px;height:23px;background:repeating-linear-gradient(180deg,#b9b9b9 0 3px,transparent 3px 5px);"></div>
<div class="b" style="left:690px;top:485px;width:1px;height:23px;background:repeating-linear-gradient(180deg,#b9b9b9 0 3px,transparent 3px 5px);"></div>
<div class="b" style="left:819px;top:485px;width:1px;height:23px;background:repeating-linear-gradient(180deg,#b9b9b9 0 3px,transparent 3px 5px);"></div>
<div class="b" style="left:211px;top:508px;width:1px;height:23px;background:repeating-linear-gradient(180deg,#b9b9b9 0 3px,transparent 3px 5px);"></div>
<div class="b" style="left:557px;top:508px;width:1px;height:23px;background:repeating-linear-gradient(180deg,#b9b9b9 0 3px,transparent 3px 5px);"></div>
<div class="b" style="left:690px;top:508px;width:1px;height:23px;background:repeating-linear-gradient(180deg,#b9b9b9 0 3px,transparent 3px 5px);"></div>
<div class="b" style="left:819px;top:508px;width:1px;height:23px;background:repeating-linear-gradient(180deg,#b9b9b9 0 3px,transparent 3px 5px);"></div>
<div class="b" style="left:211px;top:554px;width:1px;height:23px;background:repeating-linear-gradient(180deg,#b9b9b9 0 3px,transparent 3px 5px);"></div>
<div class="b" style="left:557px;top:554px;width:1px;height:23px;background:repeating-linear-gradient(180deg,#b9b9b9 0 3px,transparent 3px 5px);"></div>
<div class="b" style="left:690px;top:554px;width:1px;height:23px;background:repeating-linear-gradient(180deg,#b9b9b9 0 3px,transparent 3px 5px);"></div>
<div class="b" style="left:819px;top:554px;width:1px;height:23px;background:repeating-linear-gradient(180deg,#b9b9b9 0 3px,transparent 3px 5px);"></div>
<div class="b" style="left:820px;top:90px;width:12px;height:488px;background:#f2f2f4;"></div>
<div class="b" style="left:45px;top:578px;width:787px;height:14px;background:#f2f2f4;"></div>
<div class="b" style="left:46px;top:580px;width:696px;height:11px;background:#dadadd;border-radius:6px;"></div>
<div class="b" style="left:838px;top:90px;width:831px;height:488px;background:#fff;"></div>
<div class="b" style="left:838px;top:140px;width:1072px;height:23px;background:#17365d;"></div>
<div class="b" style="left:838px;top:163px;width:1072px;height:23px;background:#1d4a80;"></div>
<div class="b" style="left:838px;top:186px;width:1072px;height:23px;background:#21589f;"></div>
<div class="b" style="left:838px;top:231px;width:831px;height:1px;background:repeating-linear-gradient(90deg,#b9b9b9 0 3px,transparent 3px 5px);"></div>
<div class="b" style="left:838px;top:254px;width:831px;height:1px;background:repeating-linear-gradient(90deg,#b9b9b9 0 3px,transparent 3px 5px);"></div>
<div class="b" style="left:838px;top:277px;width:831px;height:1px;background:repeating-linear-gradient(90deg,#b9b9b9 0 3px,transparent 3px 5px);"></div>
<div class="b" style="left:838px;top:278px;width:1072px;height:23px;background:#21589f;"></div>
<div class="b" style="left:838px;top:301px;width:1072px;height:23px;background:#2869b8;"></div>
<div class="b" style="left:838px;top:346px;width:831px;height:1px;background:repeating-linear-gradient(90deg,#b9b9b9 0 3px,transparent 3px 5px);"></div>
<div class="b" style="left:838px;top:347px;width:831px;height:23px;background:#dce8f8;"></div>
<div class="b" style="left:838px;top:369px;width:831px;height:1px;background:repeating-linear-gradient(90deg,#b9b9b9 0 3px,transparent 3px 5px);"></div>
<div class="b" style="left:838px;top:392px;width:831px;height:1px;background:repeating-linear-gradient(90deg,#b9b9b9 0 3px,transparent 3px 5px);"></div>
<div class="b" style="left:838px;top:415px;width:831px;height:1px;background:repeating-linear-gradient(90deg,#b9b9b9 0 3px,transparent 3px 5px);"></div>
<div class="b" style="left:838px;top:438px;width:831px;height:1px;background:repeating-linear-gradient(90deg,#b9b9b9 0 3px,transparent 3px 5px);"></div>
<div class="b" style="left:838px;top:439px;width:1072px;height:23px;background:#2869b8;"></div>
<div class="b" style="left:838px;top:484px;width:831px;height:1px;background:repeating-linear-gradient(90deg,#b9b9b9 0 3px,transparent 3px 5px);"></div>
<div class="b" style="left:838px;top:507px;width:831px;height:1px;background:repeating-linear-gradient(90deg,#b9b9b9 0 3px,transparent 3px 5px);"></div>
<div class="b" style="left:838px;top:530px;width:831px;height:1px;background:repeating-linear-gradient(90deg,#b9b9b9 0 3px,transparent 3px 5px);"></div>
<div class="b" style="left:838px;top:531px;width:1072px;height:23px;background:#2869b8;"></div>
<div class="b" style="left:838px;top:576px;width:831px;height:1px;background:repeating-linear-gradient(90deg,#b9b9b9 0 3px,transparent 3px 5px);"></div>
<div class="b" style="left:927px;top:209px;width:1px;height:23px;background:repeating-linear-gradient(180deg,#b9b9b9 0 3px,transparent 3px 5px);"></div>
<div class="b" style="left:927px;top:232px;width:1px;height:23px;background:repeating-linear-gradient(180deg,#b9b9b9 0 3px,transparent 3px 5px);"></div>
<div class="b" style="left:927px;top:255px;width:1px;height:23px;background:repeating-linear-gradient(180deg,#b9b9b9 0 3px,transparent 3px 5px);"></div>
<div class="b" style="left:927px;top:324px;width:1px;height:23px;background:repeating-linear-gradient(180deg,#b9b9b9 0 3px,transparent 3px 5px);"></div>
<div class="b" style="left:927px;top:347px;width:1px;height:23px;background:repeating-linear-gradient(180deg,#b9b9b9 0 3px,transparent 3px 5px);"></div>
<div class="b" style="left:927px;top:370px;width:1px;height:23px;background:repeating-linear-gradient(180deg,#b9b9b9 0 3px,transparent 3px 5px);"></div>
<div class="b" style="left:927px;top:393px;width:1px;height:23px;background:repeating-linear-gradient(180deg,#b9b9b9 0 3px,transparent 3px 5px);"></div>
<div class="b" style="left:927px;top:416px;width:1px;height:23px;background:repeating-linear-gradient(180deg,#b9b9b9 0 3px,transparent 3px 5px);"></div>
<div class="b" style="left:927px;top:462px;width:1px;height:23px;background:repeating-linear-gradient(180deg,#b9b9b9 0 3px,transparent 3px 5px);"></div>
<div class="b" style="left:927px;top:485px;width:1px;height:23px;background:repeating-linear-gradient(180deg,#b9b9b9 0 3px,transparent 3px 5px);"></div>
<div class="b" style="left:927px;top:508px;width:1px;height:23px;background:repeating-linear-gradient(180deg,#b9b9b9 0 3px,transparent 3px 5px);"></div>
<div class="b" style="left:927px;top:554px;width:1px;height:23px;background:repeating-linear-gradient(180deg,#b9b9b9 0 3px,transparent 3px 5px);"></div>
<div class="b" style="left:1017px;top:209px;width:1px;height:23px;background:repeating-linear-gradient(180deg,#b9b9b9 0 3px,transparent 3px 5px);"></div>
<div class="b" style="left:1017px;top:232px;width:1px;height:23px;background:repeating-linear-gradient(180deg,#b9b9b9 0 3px,transparent 3px 5px);"></div>
<div class="b" style="left:1017px;top:255px;width:1px;height:23px;background:repeating-linear-gradient(180deg,#b9b9b9 0 3px,transparent 3px 5px);"></div>
<div class="b" style="left:1017px;top:324px;width:1px;height:23px;background:repeating-linear-gradient(180deg,#b9b9b9 0 3px,transparent 3px 5px);"></div>
<div class="b" style="left:1017px;top:347px;width:1px;height:23px;background:repeating-linear-gradient(180deg,#b9b9b9 0 3px,transparent 3px 5px);"></div>
<div class="b" style="left:1017px;top:370px;width:1px;height:23px;background:repeating-linear-gradient(180deg,#b9b9b9 0 3px,transparent 3px 5px);"></div>
<div class="b" style="left:1017px;top:393px;width:1px;height:23px;background:repeating-linear-gradient(180deg,#b9b9b9 0 3px,transparent 3px 5px);"></div>
<div class="b" style="left:1017px;top:416px;width:1px;height:23px;background:repeating-linear-gradient(180deg,#b9b9b9 0 3px,transparent 3px 5px);"></div>
<div class="b" style="left:1017px;top:462px;width:1px;height:23px;background:repeating-linear-gradient(180deg,#b9b9b9 0 3px,transparent 3px 5px);"></div>
<div class="b" style="left:1017px;top:485px;width:1px;height:23px;background:repeating-linear-gradient(180deg,#b9b9b9 0 3px,transparent 3px 5px);"></div>
<div class="b" style="left:1017px;top:508px;width:1px;height:23px;background:repeating-linear-gradient(180deg,#b9b9b9 0 3px,transparent 3px 5px);"></div>
<div class="b" style="left:1017px;top:554px;width:1px;height:23px;background:repeating-linear-gradient(180deg,#b9b9b9 0 3px,transparent 3px 5px);"></div>
<div class="b" style="left:1107px;top:209px;width:1px;height:23px;background:#b5b5bb;"></div>
<div class="b" style="left:1107px;top:232px;width:1px;height:23px;background:#b5b5bb;"></div>
<div class="b" style="left:1107px;top:255px;width:1px;height:23px;background:#b5b5bb;"></div>
<div class="b" style="left:1107px;top:324px;width:1px;height:23px;background:#b5b5bb;"></div>
<div class="b" style="left:1107px;top:347px;width:1px;height:23px;background:#b5b5bb;"></div>
<div class="b" style="left:1107px;top:370px;width:1px;height:23px;background:#b5b5bb;"></div>
<div class="b" style="left:1107px;top:393px;width:1px;height:23px;background:#b5b5bb;"></div>
<div class="b" style="left:1107px;top:416px;width:1px;height:23px;background:#b5b5bb;"></div>
<div class="b" style="left:1107px;top:462px;width:1px;height:23px;background:#b5b5bb;"></div>
<div class="b" style="left:1107px;top:485px;width:1px;height:23px;background:#b5b5bb;"></div>
<div class="b" style="left:1107px;top:508px;width:1px;height:23px;background:#b5b5bb;"></div>
<div class="b" style="left:1107px;top:554px;width:1px;height:23px;background:#b5b5bb;"></div>
<div class="b" style="left:1197px;top:209px;width:1px;height:23px;background:repeating-linear-gradient(180deg,#b9b9b9 0 3px,transparent 3px 5px);"></div>
<div class="b" style="left:1197px;top:232px;width:1px;height:23px;background:repeating-linear-gradient(180deg,#b9b9b9 0 3px,transparent 3px 5px);"></div>
<div class="b" style="left:1197px;top:255px;width:1px;height:23px;background:repeating-linear-gradient(180deg,#b9b9b9 0 3px,transparent 3px 5px);"></div>
<div class="b" style="left:1197px;top:324px;width:1px;height:23px;background:repeating-linear-gradient(180deg,#b9b9b9 0 3px,transparent 3px 5px);"></div>
<div class="b" style="left:1197px;top:347px;width:1px;height:23px;background:repeating-linear-gradient(180deg,#b9b9b9 0 3px,transparent 3px 5px);"></div>
<div class="b" style="left:1197px;top:370px;width:1px;height:23px;background:repeating-linear-gradient(180deg,#b9b9b9 0 3px,transparent 3px 5px);"></div>
<div class="b" style="left:1197px;top:393px;width:1px;height:23px;background:repeating-linear-gradient(180deg,#b9b9b9 0 3px,transparent 3px 5px);"></div>
<div class="b" style="left:1197px;top:416px;width:1px;height:23px;background:repeating-linear-gradient(180deg,#b9b9b9 0 3px,transparent 3px 5px);"></div>
<div class="b" style="left:1197px;top:462px;width:1px;height:23px;background:repeating-linear-gradient(180deg,#b9b9b9 0 3px,transparent 3px 5px);"></div>
<div class="b" style="left:1197px;top:485px;width:1px;height:23px;background:repeating-linear-gradient(180deg,#b9b9b9 0 3px,transparent 3px 5px);"></div>
<div class="b" style="left:1197px;top:508px;width:1px;height:23px;background:repeating-linear-gradient(180deg,#b9b9b9 0 3px,transparent 3px 5px);"></div>
<div class="b" style="left:1197px;top:554px;width:1px;height:23px;background:repeating-linear-gradient(180deg,#b9b9b9 0 3px,transparent 3px 5px);"></div>
<div class="b" style="left:1287px;top:209px;width:1px;height:23px;background:repeating-linear-gradient(180deg,#b9b9b9 0 3px,transparent 3px 5px);"></div>
<div class="b" style="left:1287px;top:232px;width:1px;height:23px;background:repeating-linear-gradient(180deg,#b9b9b9 0 3px,transparent 3px 5px);"></div>
<div class="b" style="left:1287px;top:255px;width:1px;height:23px;background:repeating-linear-gradient(180deg,#b9b9b9 0 3px,transparent 3px 5px);"></div>
<div class="b" style="left:1287px;top:324px;width:1px;height:23px;background:repeating-linear-gradient(180deg,#b9b9b9 0 3px,transparent 3px 5px);"></div>
<div class="b" style="left:1287px;top:347px;width:1px;height:23px;background:repeating-linear-gradient(180deg,#b9b9b9 0 3px,transparent 3px 5px);"></div>
<div class="b" style="left:1287px;top:370px;width:1px;height:23px;background:repeating-linear-gradient(180deg,#b9b9b9 0 3px,transparent 3px 5px);"></div>
<div class="b" style="left:1287px;top:393px;width:1px;height:23px;background:repeating-linear-gradient(180deg,#b9b9b9 0 3px,transparent 3px 5px);"></div>
<div class="b" style="left:1287px;top:416px;width:1px;height:23px;background:repeating-linear-gradient(180deg,#b9b9b9 0 3px,transparent 3px 5px);"></div>
<div class="b" style="left:1287px;top:462px;width:1px;height:23px;background:repeating-linear-gradient(180deg,#b9b9b9 0 3px,transparent 3px 5px);"></div>
<div class="b" style="left:1287px;top:485px;width:1px;height:23px;background:repeating-linear-gradient(180deg,#b9b9b9 0 3px,transparent 3px 5px);"></div>
<div class="b" style="left:1287px;top:508px;width:1px;height:23px;background:repeating-linear-gradient(180deg,#b9b9b9 0 3px,transparent 3px 5px);"></div>
<div class="b" style="left:1287px;top:554px;width:1px;height:23px;background:repeating-linear-gradient(180deg,#b9b9b9 0 3px,transparent 3px 5px);"></div>
<div class="b" style="left:1378px;top:209px;width:1px;height:23px;background:#b5b5bb;"></div>
<div class="b" style="left:1378px;top:232px;width:1px;height:23px;background:#b5b5bb;"></div>
<div class="b" style="left:1378px;top:255px;width:1px;height:23px;background:#b5b5bb;"></div>
<div class="b" style="left:1378px;top:324px;width:1px;height:23px;background:#b5b5bb;"></div>
<div class="b" style="left:1378px;top:347px;width:1px;height:23px;background:#b5b5bb;"></div>
<div class="b" style="left:1378px;top:370px;width:1px;height:23px;background:#b5b5bb;"></div>
<div class="b" style="left:1378px;top:393px;width:1px;height:23px;background:#b5b5bb;"></div>
<div class="b" style="left:1378px;top:416px;width:1px;height:23px;background:#b5b5bb;"></div>
<div class="b" style="left:1378px;top:462px;width:1px;height:23px;background:#b5b5bb;"></div>
<div class="b" style="left:1378px;top:485px;width:1px;height:23px;background:#b5b5bb;"></div>
<div class="b" style="left:1378px;top:508px;width:1px;height:23px;background:#b5b5bb;"></div>
<div class="b" style="left:1378px;top:554px;width:1px;height:23px;background:#b5b5bb;"></div>
<div class="b" style="left:1468px;top:209px;width:1px;height:23px;background:repeating-linear-gradient(180deg,#b9b9b9 0 3px,transparent 3px 5px);"></div>
<div class="b" style="left:1468px;top:232px;width:1px;height:23px;background:repeating-linear-gradient(180deg,#b9b9b9 0 3px,transparent 3px 5px);"></div>
<div class="b" style="left:1468px;top:255px;width:1px;height:23px;background:repeating-linear-gradient(180deg,#b9b9b9 0 3px,transparent 3px 5px);"></div>
<div class="b" style="left:1468px;top:324px;width:1px;height:23px;background:repeating-linear-gradient(180deg,#b9b9b9 0 3px,transparent 3px 5px);"></div>
<div class="b" style="left:1468px;top:347px;width:1px;height:23px;background:repeating-linear-gradient(180deg,#b9b9b9 0 3px,transparent 3px 5px);"></div>
<div class="b" style="left:1468px;top:370px;width:1px;height:23px;background:repeating-linear-gradient(180deg,#b9b9b9 0 3px,transparent 3px 5px);"></div>
<div class="b" style="left:1468px;top:393px;width:1px;height:23px;background:repeating-linear-gradient(180deg,#b9b9b9 0 3px,transparent 3px 5px);"></div>
<div class="b" style="left:1468px;top:416px;width:1px;height:23px;background:repeating-linear-gradient(180deg,#b9b9b9 0 3px,transparent 3px 5px);"></div>
<div class="b" style="left:1468px;top:462px;width:1px;height:23px;background:repeating-linear-gradient(180deg,#b9b9b9 0 3px,transparent 3px 5px);"></div>
<div class="b" style="left:1468px;top:485px;width:1px;height:23px;background:repeating-linear-gradient(180deg,#b9b9b9 0 3px,transparent 3px 5px);"></div>
<div class="b" style="left:1468px;top:508px;width:1px;height:23px;background:repeating-linear-gradient(180deg,#b9b9b9 0 3px,transparent 3px 5px);"></div>
<div class="b" style="left:1468px;top:554px;width:1px;height:23px;background:repeating-linear-gradient(180deg,#b9b9b9 0 3px,transparent 3px 5px);"></div>
<div class="b" style="left:1558px;top:209px;width:1px;height:23px;background:repeating-linear-gradient(180deg,#b9b9b9 0 3px,transparent 3px 5px);"></div>
<div class="b" style="left:1558px;top:232px;width:1px;height:23px;background:repeating-linear-gradient(180deg,#b9b9b9 0 3px,transparent 3px 5px);"></div>
<div class="b" style="left:1558px;top:255px;width:1px;height:23px;background:repeating-linear-gradient(180deg,#b9b9b9 0 3px,transparent 3px 5px);"></div>
<div class="b" style="left:1558px;top:324px;width:1px;height:23px;background:repeating-linear-gradient(180deg,#b9b9b9 0 3px,transparent 3px 5px);"></div>
<div class="b" style="left:1558px;top:347px;width:1px;height:23px;background:repeating-linear-gradient(180deg,#b9b9b9 0 3px,transparent 3px 5px);"></div>
<div class="b" style="left:1558px;top:370px;width:1px;height:23px;background:repeating-linear-gradient(180deg,#b9b9b9 0 3px,transparent 3px 5px);"></div>
<div class="b" style="left:1558px;top:393px;width:1px;height:23px;background:repeating-linear-gradient(180deg,#b9b9b9 0 3px,transparent 3px 5px);"></div>
<div class="b" style="left:1558px;top:416px;width:1px;height:23px;background:repeating-linear-gradient(180deg,#b9b9b9 0 3px,transparent 3px 5px);"></div>
<div class="b" style="left:1558px;top:462px;width:1px;height:23px;background:repeating-linear-gradient(180deg,#b9b9b9 0 3px,transparent 3px 5px);"></div>
<div class="b" style="left:1558px;top:485px;width:1px;height:23px;background:repeating-linear-gradient(180deg,#b9b9b9 0 3px,transparent 3px 5px);"></div>
<div class="b" style="left:1558px;top:508px;width:1px;height:23px;background:repeating-linear-gradient(180deg,#b9b9b9 0 3px,transparent 3px 5px);"></div>
<div class="b" style="left:1558px;top:554px;width:1px;height:23px;background:repeating-linear-gradient(180deg,#b9b9b9 0 3px,transparent 3px 5px);"></div>
<div class="b" style="left:1648px;top:209px;width:1px;height:23px;background:#b5b5bb;"></div>
<div class="b" style="left:1648px;top:232px;width:1px;height:23px;background:#b5b5bb;"></div>
<div class="b" style="left:1648px;top:255px;width:1px;height:23px;background:#b5b5bb;"></div>
<div class="b" style="left:1648px;top:324px;width:1px;height:23px;background:#b5b5bb;"></div>
<div class="b" style="left:1648px;top:347px;width:1px;height:23px;background:#b5b5bb;"></div>
<div class="b" style="left:1648px;top:370px;width:1px;height:23px;background:#b5b5bb;"></div>
<div class="b" style="left:1648px;top:393px;width:1px;height:23px;background:#b5b5bb;"></div>
<div class="b" style="left:1648px;top:416px;width:1px;height:23px;background:#b5b5bb;"></div>
<div class="b" style="left:1648px;top:462px;width:1px;height:23px;background:#b5b5bb;"></div>
<div class="b" style="left:1648px;top:485px;width:1px;height:23px;background:#b5b5bb;"></div>
<div class="b" style="left:1648px;top:508px;width:1px;height:23px;background:#b5b5bb;"></div>
<div class="b" style="left:1648px;top:554px;width:1px;height:23px;background:#b5b5bb;"></div>
<div class="t" style="left:1599.9px;top:278.8px;font-size:11.3px;line-height:16px;color:#2fbf71;">5</div>
<div class="t" style="left:1599.9px;top:301.8px;font-size:11.3px;line-height:16px;color:#2fbf71;">5</div>
<div class="t" style="left:1599.9px;top:347.8px;font-size:11.3px;line-height:16px;color:#2fbf71;">5</div>
<div class="b" style="left:1669px;top:90px;width:241px;height:50px;background:#fff;"></div>
<div class="b" style="left:1669px;top:140px;width:241px;height:438px;background:#f4f4f4;"></div>
<div class="b" style="left:1669px;top:140px;width:241px;height:23px;background:#17365d;"></div>
<div class="t" style="left:1695.6px;top:140.8px;font-size:11.3px;line-height:16px;color:#fff;">2 492</div>
<div class="t" style="left:1775.6px;top:140.8px;font-size:11.3px;line-height:16px;color:#fff;">2 492</div>
<div class="t" style="left:1855.6px;top:140.8px;font-size:11.3px;line-height:16px;color:#fff;">2 492</div>
<div class="b" style="left:1669px;top:163px;width:241px;height:23px;background:#1d4a80;"></div>
<div class="t" style="left:1695.6px;top:163.8px;font-size:11.3px;line-height:16px;color:#fff;">2 492</div>
<div class="t" style="left:1775.6px;top:163.8px;font-size:11.3px;line-height:16px;color:#fff;">2 492</div>
<div class="t" style="left:1855.6px;top:163.8px;font-size:11.3px;line-height:16px;color:#fff;">2 492</div>
<div class="b" style="left:1669px;top:186px;width:241px;height:23px;background:#21589f;"></div>
<div class="t" style="left:1700.3px;top:186.8px;font-size:11.3px;line-height:16px;color:#fff;">909</div>
<div class="t" style="left:1780.3px;top:186.8px;font-size:11.3px;line-height:16px;color:#fff;">909</div>
<div class="t" style="left:1860.3px;top:186.8px;font-size:11.3px;line-height:16px;color:#fff;">909</div>
<div class="b" style="left:1669px;top:231px;width:241px;height:1px;background:repeating-linear-gradient(90deg,#b9b9b9 0 3px,transparent 3px 5px);"></div>
<div class="t" style="left:1700.3px;top:209.8px;font-size:11.3px;line-height:16px;color:#222;">134</div>
<div class="t" style="left:1780.3px;top:209.8px;font-size:11.3px;line-height:16px;color:#222;">134</div>
<div class="t" style="left:1860.3px;top:209.8px;font-size:11.3px;line-height:16px;color:#222;">134</div>
<div class="b" style="left:1749px;top:209px;width:1px;height:23px;background:repeating-linear-gradient(180deg,#b9b9b9 0 3px,transparent 3px 5px);"></div>
<div class="b" style="left:1829px;top:209px;width:1px;height:23px;background:repeating-linear-gradient(180deg,#b9b9b9 0 3px,transparent 3px 5px);"></div>
<div class="b" style="left:1909px;top:209px;width:1px;height:23px;background:repeating-linear-gradient(180deg,#b9b9b9 0 3px,transparent 3px 5px);"></div>
<div class="b" style="left:1669px;top:254px;width:241px;height:1px;background:repeating-linear-gradient(90deg,#b9b9b9 0 3px,transparent 3px 5px);"></div>
<div class="t" style="left:1700.3px;top:232.8px;font-size:11.3px;line-height:16px;color:#222;">234</div>
<div class="t" style="left:1780.3px;top:232.8px;font-size:11.3px;line-height:16px;color:#222;">234</div>
<div class="t" style="left:1860.3px;top:232.8px;font-size:11.3px;line-height:16px;color:#222;">234</div>
<div class="b" style="left:1749px;top:232px;width:1px;height:23px;background:repeating-linear-gradient(180deg,#b9b9b9 0 3px,transparent 3px 5px);"></div>
<div class="b" style="left:1829px;top:232px;width:1px;height:23px;background:repeating-linear-gradient(180deg,#b9b9b9 0 3px,transparent 3px 5px);"></div>
<div class="b" style="left:1909px;top:232px;width:1px;height:23px;background:repeating-linear-gradient(180deg,#b9b9b9 0 3px,transparent 3px 5px);"></div>
<div class="b" style="left:1669px;top:277px;width:241px;height:1px;background:repeating-linear-gradient(90deg,#b9b9b9 0 3px,transparent 3px 5px);"></div>
<div class="t" style="left:1700.3px;top:255.8px;font-size:11.3px;line-height:16px;color:#222;">541</div>
<div class="t" style="left:1780.3px;top:255.8px;font-size:11.3px;line-height:16px;color:#222;">541</div>
<div class="t" style="left:1860.3px;top:255.8px;font-size:11.3px;line-height:16px;color:#222;">541</div>
<div class="b" style="left:1749px;top:255px;width:1px;height:23px;background:repeating-linear-gradient(180deg,#b9b9b9 0 3px,transparent 3px 5px);"></div>
<div class="b" style="left:1829px;top:255px;width:1px;height:23px;background:repeating-linear-gradient(180deg,#b9b9b9 0 3px,transparent 3px 5px);"></div>
<div class="b" style="left:1909px;top:255px;width:1px;height:23px;background:repeating-linear-gradient(180deg,#b9b9b9 0 3px,transparent 3px 5px);"></div>
<div class="b" style="left:1669px;top:278px;width:241px;height:23px;background:#21589f;"></div>
<div class="t" style="left:1695.6px;top:278.8px;font-size:11.3px;line-height:16px;color:#fff;">1 583</div>
<div class="t" style="left:1775.6px;top:278.8px;font-size:11.3px;line-height:16px;color:#fff;">1 583</div>
<div class="t" style="left:1855.6px;top:278.8px;font-size:11.3px;line-height:16px;color:#fff;">1 583</div>
<div class="b" style="left:1669px;top:301px;width:241px;height:23px;background:#2869b8;"></div>
<div class="t" style="left:1695.6px;top:301.8px;font-size:11.3px;line-height:16px;color:#fff;">1 349</div>
<div class="t" style="left:1775.6px;top:301.8px;font-size:11.3px;line-height:16px;color:#fff;">1 349</div>
<div class="t" style="left:1855.6px;top:301.8px;font-size:11.3px;line-height:16px;color:#fff;">1 349</div>
<div class="b" style="left:1669px;top:346px;width:241px;height:1px;background:repeating-linear-gradient(90deg,#b9b9b9 0 3px,transparent 3px 5px);"></div>
<div class="t" style="left:1703.4px;top:324.8px;font-size:11.3px;line-height:16px;color:#222;">34</div>
<div class="t" style="left:1783.4px;top:324.8px;font-size:11.3px;line-height:16px;color:#222;">34</div>
<div class="t" style="left:1863.4px;top:324.8px;font-size:11.3px;line-height:16px;color:#222;">34</div>
<div class="b" style="left:1749px;top:324px;width:1px;height:23px;background:repeating-linear-gradient(180deg,#b9b9b9 0 3px,transparent 3px 5px);"></div>
<div class="b" style="left:1829px;top:324px;width:1px;height:23px;background:repeating-linear-gradient(180deg,#b9b9b9 0 3px,transparent 3px 5px);"></div>
<div class="b" style="left:1909px;top:324px;width:1px;height:23px;background:repeating-linear-gradient(180deg,#b9b9b9 0 3px,transparent 3px 5px);"></div>
<div class="b" style="left:1669px;top:347px;width:241px;height:23px;background:#dce8f8;"></div>
<div class="b" style="left:1669px;top:369px;width:241px;height:1px;background:repeating-linear-gradient(90deg,#b9b9b9 0 3px,transparent 3px 5px);"></div>
<div class="t" style="left:1703.4px;top:347.8px;font-size:11.3px;line-height:16px;color:#222;">25</div>
<div class="t" style="left:1783.4px;top:347.8px;font-size:11.3px;line-height:16px;color:#222;">25</div>
<div class="t" style="left:1863.4px;top:347.8px;font-size:11.3px;line-height:16px;color:#222;">25</div>
<div class="b" style="left:1749px;top:347px;width:1px;height:23px;background:repeating-linear-gradient(180deg,#b9b9b9 0 3px,transparent 3px 5px);"></div>
<div class="b" style="left:1829px;top:347px;width:1px;height:23px;background:repeating-linear-gradient(180deg,#b9b9b9 0 3px,transparent 3px 5px);"></div>
<div class="b" style="left:1909px;top:347px;width:1px;height:23px;background:repeating-linear-gradient(180deg,#b9b9b9 0 3px,transparent 3px 5px);"></div>
<div class="b" style="left:1669px;top:392px;width:241px;height:1px;background:repeating-linear-gradient(90deg,#b9b9b9 0 3px,transparent 3px 5px);"></div>
<div class="t" style="left:1703.4px;top:370.8px;font-size:11.3px;line-height:16px;color:#222;">87</div>
<div class="t" style="left:1783.4px;top:370.8px;font-size:11.3px;line-height:16px;color:#222;">87</div>
<div class="t" style="left:1863.4px;top:370.8px;font-size:11.3px;line-height:16px;color:#222;">87</div>
<div class="b" style="left:1749px;top:370px;width:1px;height:23px;background:repeating-linear-gradient(180deg,#b9b9b9 0 3px,transparent 3px 5px);"></div>
<div class="b" style="left:1829px;top:370px;width:1px;height:23px;background:repeating-linear-gradient(180deg,#b9b9b9 0 3px,transparent 3px 5px);"></div>
<div class="b" style="left:1909px;top:370px;width:1px;height:23px;background:repeating-linear-gradient(180deg,#b9b9b9 0 3px,transparent 3px 5px);"></div>
<div class="b" style="left:1669px;top:415px;width:241px;height:1px;background:repeating-linear-gradient(90deg,#b9b9b9 0 3px,transparent 3px 5px);"></div>
<div class="t" style="left:1700.3px;top:393.8px;font-size:11.3px;line-height:16px;color:#222;">672</div>
<div class="t" style="left:1780.3px;top:393.8px;font-size:11.3px;line-height:16px;color:#222;">672</div>
<div class="t" style="left:1860.3px;top:393.8px;font-size:11.3px;line-height:16px;color:#222;">672</div>
<div class="b" style="left:1749px;top:393px;width:1px;height:23px;background:repeating-linear-gradient(180deg,#b9b9b9 0 3px,transparent 3px 5px);"></div>
<div class="b" style="left:1829px;top:393px;width:1px;height:23px;background:repeating-linear-gradient(180deg,#b9b9b9 0 3px,transparent 3px 5px);"></div>
<div class="b" style="left:1909px;top:393px;width:1px;height:23px;background:repeating-linear-gradient(180deg,#b9b9b9 0 3px,transparent 3px 5px);"></div>
<div class="b" style="left:1669px;top:438px;width:241px;height:1px;background:repeating-linear-gradient(90deg,#b9b9b9 0 3px,transparent 3px 5px);"></div>
<div class="t" style="left:1700.3px;top:416.8px;font-size:11.3px;line-height:16px;color:#222;">531</div>
<div class="t" style="left:1780.3px;top:416.8px;font-size:11.3px;line-height:16px;color:#222;">531</div>
<div class="t" style="left:1860.3px;top:416.8px;font-size:11.3px;line-height:16px;color:#222;">531</div>
<div class="b" style="left:1749px;top:416px;width:1px;height:23px;background:repeating-linear-gradient(180deg,#b9b9b9 0 3px,transparent 3px 5px);"></div>
<div class="b" style="left:1829px;top:416px;width:1px;height:23px;background:repeating-linear-gradient(180deg,#b9b9b9 0 3px,transparent 3px 5px);"></div>
<div class="b" style="left:1909px;top:416px;width:1px;height:23px;background:repeating-linear-gradient(180deg,#b9b9b9 0 3px,transparent 3px 5px);"></div>
<div class="b" style="left:1669px;top:439px;width:241px;height:23px;background:#2869b8;"></div>
<div class="t" style="left:1700.3px;top:439.8px;font-size:11.3px;line-height:16px;color:#fff;">157</div>
<div class="t" style="left:1780.3px;top:439.8px;font-size:11.3px;line-height:16px;color:#fff;">157</div>
<div class="t" style="left:1860.3px;top:439.8px;font-size:11.3px;line-height:16px;color:#fff;">157</div>
<div class="b" style="left:1669px;top:484px;width:241px;height:1px;background:repeating-linear-gradient(90deg,#b9b9b9 0 3px,transparent 3px 5px);"></div>
<div class="t" style="left:1703.4px;top:462.8px;font-size:11.3px;line-height:16px;color:#222;">12</div>
<div class="t" style="left:1783.4px;top:462.8px;font-size:11.3px;line-height:16px;color:#222;">12</div>
<div class="t" style="left:1863.4px;top:462.8px;font-size:11.3px;line-height:16px;color:#222;">12</div>
<div class="b" style="left:1749px;top:462px;width:1px;height:23px;background:repeating-linear-gradient(180deg,#b9b9b9 0 3px,transparent 3px 5px);"></div>
<div class="b" style="left:1829px;top:462px;width:1px;height:23px;background:repeating-linear-gradient(180deg,#b9b9b9 0 3px,transparent 3px 5px);"></div>
<div class="b" style="left:1909px;top:462px;width:1px;height:23px;background:repeating-linear-gradient(180deg,#b9b9b9 0 3px,transparent 3px 5px);"></div>
<div class="b" style="left:1669px;top:507px;width:241px;height:1px;background:repeating-linear-gradient(90deg,#b9b9b9 0 3px,transparent 3px 5px);"></div>
<div class="t" style="left:1703.4px;top:485.8px;font-size:11.3px;line-height:16px;color:#222;">45</div>
<div class="t" style="left:1783.4px;top:485.8px;font-size:11.3px;line-height:16px;color:#222;">45</div>
<div class="t" style="left:1863.4px;top:485.8px;font-size:11.3px;line-height:16px;color:#222;">45</div>
<div class="b" style="left:1749px;top:485px;width:1px;height:23px;background:repeating-linear-gradient(180deg,#b9b9b9 0 3px,transparent 3px 5px);"></div>
<div class="b" style="left:1829px;top:485px;width:1px;height:23px;background:repeating-linear-gradient(180deg,#b9b9b9 0 3px,transparent 3px 5px);"></div>
<div class="b" style="left:1909px;top:485px;width:1px;height:23px;background:repeating-linear-gradient(180deg,#b9b9b9 0 3px,transparent 3px 5px);"></div>
<div class="b" style="left:1669px;top:530px;width:241px;height:1px;background:repeating-linear-gradient(90deg,#b9b9b9 0 3px,transparent 3px 5px);"></div>
<div class="t" style="left:1700.3px;top:508.8px;font-size:11.3px;line-height:16px;color:#222;">100</div>
<div class="t" style="left:1780.3px;top:508.8px;font-size:11.3px;line-height:16px;color:#222;">100</div>
<div class="t" style="left:1860.3px;top:508.8px;font-size:11.3px;line-height:16px;color:#222;">100</div>
<div class="b" style="left:1749px;top:508px;width:1px;height:23px;background:repeating-linear-gradient(180deg,#b9b9b9 0 3px,transparent 3px 5px);"></div>
<div class="b" style="left:1829px;top:508px;width:1px;height:23px;background:repeating-linear-gradient(180deg,#b9b9b9 0 3px,transparent 3px 5px);"></div>
<div class="b" style="left:1909px;top:508px;width:1px;height:23px;background:repeating-linear-gradient(180deg,#b9b9b9 0 3px,transparent 3px 5px);"></div>
<div class="b" style="left:1669px;top:531px;width:241px;height:23px;background:#2869b8;"></div>
<div class="t" style="left:1703.4px;top:531.8px;font-size:11.3px;line-height:16px;color:#fff;">77</div>
<div class="t" style="left:1783.4px;top:531.8px;font-size:11.3px;line-height:16px;color:#fff;">77</div>
<div class="t" style="left:1863.4px;top:531.8px;font-size:11.3px;line-height:16px;color:#fff;">77</div>
<div class="b" style="left:1669px;top:576px;width:241px;height:1px;background:repeating-linear-gradient(90deg,#b9b9b9 0 3px,transparent 3px 5px);"></div>
<div class="t" style="left:1703.4px;top:554.8px;font-size:11.3px;line-height:16px;color:#222;">77</div>
<div class="t" style="left:1783.4px;top:554.8px;font-size:11.3px;line-height:16px;color:#222;">77</div>
<div class="t" style="left:1863.4px;top:554.8px;font-size:11.3px;line-height:16px;color:#222;">77</div>
<div class="b" style="left:1749px;top:554px;width:1px;height:23px;background:repeating-linear-gradient(180deg,#b9b9b9 0 3px,transparent 3px 5px);"></div>
<div class="b" style="left:1829px;top:554px;width:1px;height:23px;background:repeating-linear-gradient(180deg,#b9b9b9 0 3px,transparent 3px 5px);"></div>
<div class="b" style="left:1909px;top:554px;width:1px;height:23px;background:repeating-linear-gradient(180deg,#b9b9b9 0 3px,transparent 3px 5px);"></div>
<div class="b" style="left:1669px;top:115px;width:1px;height:463px;background:#b5b5bb;"></div>
<div class="b" style="left:1909px;top:90px;width:1px;height:50px;background:#c9c9cf;"></div>
<div class="b" style="left:1669px;top:114px;width:241px;height:1px;background:#c9c9cf;"></div>
<div class="b" style="left:1669px;top:139px;width:241px;height:1px;background:#c9c9cf;"></div>
<div class="b" style="left:1749px;top:115px;width:1px;height:25px;background:repeating-linear-gradient(180deg,#b9b9b9 0 3px,transparent 3px 5px);"></div>
<div class="b" style="left:1827px;top:115px;width:1px;height:25px;background:repeating-linear-gradient(180deg,#b9b9b9 0 3px,transparent 3px 5px);"></div>
<div class="t" style="left:1760.2px;top:94.5px;font-size:12px;line-height:17px;color:#222;">Суммарно</div>
<div class="t" style="left:1680.7px;top:119.5px;font-size:12px;line-height:17px;color:#222;">Согл.план</div>
<div class="t" style="left:1759.3px;top:119.5px;font-size:12px;line-height:17px;color:#222;">Опер.план</div>
<div class="t" style="left:1855.7px;top:119.5px;font-size:12px;line-height:17px;color:#222;">Факт</div>
<svg class="i" style="left:1878.0px;top:95.0px;" width="16" height="16" viewBox="0 0 24 24" fill="none" stroke="#333" stroke-width="1.6" stroke-linecap="round" stroke-linejoin="round"><path d="M7.500 2.500l9.500 9.500-9.500 9.500" stroke-width="2.300"/></svg>
<div class="b" style="left:1910px;top:90px;width:8px;height:488px;background:#f2f2f4;"></div>
<div class="b" style="left:1911px;top:90px;width:7px;height:50px;background:#dcdcdf;border-radius:4px;"></div>
<div class="b" style="left:838px;top:578px;width:1080px;height:14px;background:#f2f2f4;"></div>
<div class="b" style="left:1064px;top:580px;width:21px;height:11px;background:#dadadd;border-radius:6px;"></div>
<div class="b" style="left:832px;top:45px;width:6px;height:547px;background:#b2b2ba;"></div>
<div class="b" style="left:45px;top:592px;width:1873px;height:6px;background:#b2b2ba;"></div>
<div class="b" style="left:691px;top:89px;width:833px;height:401px;background:#fff;box-shadow:0 1px 4px rgba(0,0,0,.42);border-radius:0 0 4px 4px;"></div>
<div class="b" style="left:691px;top:89px;width:833px;height:44px;background:#efeff2;"></div>
<div class="t" style="left:707.0px;top:99.5px;font-size:16.5px;line-height:23px;color:#222;letter-spacing:0.40px;">Суточное распределение суммарного плана и факта на работах</div>
<svg class="i" style="left:1491.0px;top:101.0px;" width="20" height="20" viewBox="0 0 24 24" fill="none" stroke="#55555c" stroke-width="1.8" stroke-linecap="round" stroke-linejoin="round"><path d="M4 4l16 16M20 4L4 20"/></svg>
<div class="b" style="left:1512px;top:133px;width:11px;height:288px;background:#efeff2;"></div>
<div class="b" style="left:1512px;top:133px;width:11px;height:258px;background:#d9d9dc;border-radius:6px;"></div>
<div class="t" style="left:707.0px;top:147.5px;font-size:15px;line-height:21px;color:#222;letter-spacing:-0.01px;">Выберите режим распределения:</div>
<div class="t" style="left:1109.0px;top:147.5px;font-size:15px;line-height:21px;color:#222;letter-spacing:-0.01px;">Выберите тип распределения:</div>
<div class="t" style="left:707.0px;top:289.0px;font-size:15px;line-height:21px;color:#222;letter-spacing:-0.05px;">Выберите элементы для распределения:</div>
<svg class="i" style="left:705.5px;top:189.5px" width="22" height="22" viewBox="0 0 22 22"><circle cx="11" cy="11" r="9.200" fill="#fff" stroke="#55555b" stroke-width="1.600"/><circle cx="11" cy="11" r="5" fill="#55555b"/></svg>
<div class="t" style="left:734.0px;top:190.3px;font-size:15px;line-height:21px;color:#222;letter-spacing:-0.06px;">По оперативному плану</div>
<svg class="i" style="left:705.5px;top:217.5px" width="22" height="22" viewBox="0 0 22 22"><circle cx="11" cy="11" r="9.200" fill="#fff" stroke="#55555b" stroke-width="1.600"/></svg>
<div class="t" style="left:734.0px;top:218.3px;font-size:15px;line-height:21px;color:#222;letter-spacing:-0.03px;">По согласованному плану</div>
<svg class="i" style="left:705.5px;top:245.5px" width="22" height="22" viewBox="0 0 22 22"><circle cx="11" cy="11" r="9.200" fill="#fff" stroke="#55555b" stroke-width="1.600"/></svg>
<div class="t" style="left:734.0px;top:246.3px;font-size:15px;line-height:21px;color:#222;letter-spacing:-0.32px;">По факту</div>
<svg class="i" style="left:1108px;top:189.5px" width="22" height="22" viewBox="0 0 22 22"><circle cx="11" cy="11" r="9.200" fill="#fff" stroke="#55555b" stroke-width="1.600"/><circle cx="11" cy="11" r="5" fill="#55555b"/></svg>
<div class="t" style="left:1136.5px;top:190.3px;font-size:15px;line-height:21px;color:#222;letter-spacing:-0.09px;">Равномерно по работе</div>
<svg class="i" style="left:1108px;top:226px" width="22" height="22" viewBox="0 0 22 22"><circle cx="11" cy="11" r="9.200" fill="#fff" stroke="#55555b" stroke-width="1.600"/></svg>
<div class="t" style="left:1136.5px;top:226.5px;font-size:15px;line-height:21px;color:#222;letter-spacing:-0.08px;">План по факту, остаток равномерно</div>
<svg class="i" style="left:1108px;top:262px" width="22" height="22" viewBox="0 0 22 22"><circle cx="11" cy="11" r="9.200" fill="#fff" stroke="#55555b" stroke-width="1.600"/></svg>
<div class="t" style="left:1136.5px;top:262.5px;font-size:15px;line-height:21px;color:#222;letter-spacing:-0.04px;">Равномерно, по заданному периоду</div>
<svg class="i" style="left:1108px;top:298px" width="22" height="22" viewBox="0 0 22 22"><circle cx="11" cy="11" r="9.200" fill="#fff" stroke="#a9a9ad" stroke-width="1.600"/></svg>
<div class="t" style="left:1136.5px;top:298.5px;font-size:15px;line-height:21px;color:#8c8c90;letter-spacing:-0.12px;">Пропорционально, по физобъему</div>
<div class="b" style="left:707px;top:335px;width:24px;height:10px;background:#8db9e8;border-radius:5px;"></div>
<div class="b" style="left:717px;top:333px;width:14px;height:14px;background:#1976d2;border-radius:50%;box-shadow:0 1px 2px rgba(0,0,0,.3);"></div>
<div class="t" style="left:738.0px;top:329.2px;font-size:15px;line-height:21px;color:#222;letter-spacing:0.01px;">Физобъем</div>
<div class="b" style="left:707px;top:360.5px;width:24px;height:10px;background:#8db9e8;border-radius:5px;"></div>
<div class="b" style="left:717px;top:358.5px;width:14px;height:14px;background:#1976d2;border-radius:50%;box-shadow:0 1px 2px rgba(0,0,0,.3);"></div>
<div class="t" style="left:738.0px;top:354.5px;font-size:15px;line-height:21px;color:#222;letter-spacing:-0.02px;">Трудозатраты</div>
<div class="b" style="left:707px;top:385.5px;width:24px;height:10px;background:#a8a8ac;border-radius:5px;"></div>
<div class="b" style="left:707px;top:383.5px;width:14px;height:14px;background:#fff;border-radius:50%;box-shadow:0 1px 3px rgba(0,0,0,.4);"></div>
<div class="t" style="left:738.0px;top:379.5px;font-size:15px;line-height:21px;color:#222;letter-spacing:-0.09px;">Стоимость</div>
<div class="b" style="left:707px;top:438px;width:89.5px;height:35.5px;background:#fff;border:1.500px solid #5b9fe0;border-radius:3px;"></div>
<div class="t" style="left:723.5px;top:445.5px;font-size:15px;line-height:21px;color:#3f8ddb;letter-spacing:-0.05px;">Закрыть</div>
<div class="b" style="left:1398.5px;top:437.5px;width:109px;height:36.5px;background:#1976d2;border-radius:4px;box-shadow:0 1px 3px rgba(0,0,0,.35);"></div>
<div class="t" style="left:1414.0px;top:445.0px;font-size:15px;line-height:21px;color:#fff;letter-spacing:0.06px;-webkit-text-stroke:0.300px #fff;">Применить</div>
<div class="b" style="left:1524px;top:90px;width:266px;height:143px;background:#f4f4f6;box-shadow:0 1px 4px rgba(0,0,0,.42);border-radius:0 0 4px 4px;"></div>
<svg class="i" style="left:1539.0px;top:101.0px;" width="24" height="24" viewBox="0 0 24 24" fill="none" stroke="#5a5a62" stroke-width="1.85" stroke-linecap="round" stroke-linejoin="round"><text x="12" y="10.600" text-anchor="middle" font-family="Liberation Sans, sans-serif" font-weight="bold" fill="#5a5a62" stroke="none" font-size="14.500" textLength="24" lengthAdjust="spacingAndGlyphs">123</text><path d="M1 19.700h22.500M4.700 16l-3.700 3.700 3.700 3.700M19.800 16l3.700 3.700-3.700 3.700" stroke-width="1.900"/></svg>
<svg class="i" style="left:1539.0px;top:149.0px;" width="24" height="24" viewBox="0 0 24 24" fill="none" stroke="#5a5a62" stroke-width="1.85" stroke-linecap="round" stroke-linejoin="round"><text x="5.700" y="11" text-anchor="middle" font-family="Liberation Sans, sans-serif" font-weight="bold" fill="#5a5a62" stroke="none" font-size="13.500">!</text><path d="M13.600 4.600H24M20.500 1.100L24 4.600l-3.500 3.500" stroke-width="1.900"/><path d="M12.800 19.700H1M4.500 16.200L1 19.700l3.500 3.500" stroke-width="1.900"/><text x="19.200" y="23" text-anchor="middle" font-family="Liberation Sans, sans-serif" font-weight="bold" fill="#5a5a62" stroke="none" font-size="13.500">?</text></svg>
<svg class="i" style="left:1539.0px;top:197.0px;" width="24" height="24" viewBox="0 0 24 24" fill="none" stroke="#5a5a62" stroke-width="1.85" stroke-linecap="round" stroke-linejoin="round"><path d="M7.300 1.100l11 8.800M18.300 1.100l-11 8.800" stroke-width="1.900"/><path d="M1 19.700h22.500M4.700 16l-3.700 3.700 3.700 3.700M19.800 16l3.700 3.700-3.700 3.700" stroke-width="1.900"/></svg>
<div class="t" style="left:1580.0px;top:103.0px;font-size:15px;line-height:21px;color:#2a2a2e;letter-spacing:0.02px;">Распределить по периодам</div>
<div class="t" style="left:1580.0px;top:151.0px;font-size:15px;line-height:21px;color:#2a2a2e;letter-spacing:0.03px;">Копировать распределение</div>
<div class="t" style="left:1580.0px;top:199.0px;font-size:15px;line-height:21px;color:#2a2a2e;letter-spacing:-0.09px;">Удалить распределение</div>
<div class="b" style="left:132px;top:358.0px;width:58px;height:3px;background:#000;"></div>
<svg class="i" style="left:123px;top:354.0px" width="12" height="11" viewBox="0 0 12 11"><path d="M12 0L0 5.500 12 11z" fill="#000"/></svg>
<div class="circ" style="left:188px;top:342.5px">1</div>
<div class="b" style="left:787.5px;top:65.0px;width:59.5px;height:3px;background:#000;"></div>
<svg class="i" style="left:844px;top:61.0px" width="12" height="11" viewBox="0 0 12 11"><path d="M0 0L12 5.500 0 11z" fill="#000"/></svg>
<div class="circ" style="left:755.5px;top:49.5px">2</div>
<div class="b" style="left:1470.8px;top:65.0px;width:60.200000000000045px;height:3px;background:#000;"></div>
<svg class="i" style="left:1528px;top:61.0px" width="12" height="11" viewBox="0 0 12 11"><path d="M0 0L12 5.500 0 11z" fill="#000"/></svg>
<div class="circ" style="left:1438.8px;top:49.5px">3</div>
<div class="b" style="left:1470.8px;top:112.0px;width:60.200000000000045px;height:3px;background:#000;"></div>
<svg class="i" style="left:1528px;top:108.0px" width="12" height="11" viewBox="0 0 12 11"><path d="M0 0L12 5.500 0 11z" fill="#000"/></svg>
<div class="circ" style="left:1438.8px;top:96.5px">4</div>
<div class="b" style="left:638px;top:198.0px;width:60px;height:3px;background:#000;"></div>
<svg class="i" style="left:695px;top:194.0px" width="12" height="11" viewBox="0 0 12 11"><path d="M0 0L12 5.500 0 11z" fill="#000"/></svg>
<div class="circ" style="left:606px;top:182.5px">5</div>
<div class="b" style="left:638px;top:338.5px;width:60px;height:3px;background:#000;"></div>
<svg class="i" style="left:695px;top:334.5px" width="12" height="11" viewBox="0 0 12 11"><path d="M0 0L12 5.500 0 11z" fill="#000"/></svg>
<div class="circ" style="left:606px;top:323px">6</div>
<div class="b" style="left:1310.5px;top:200.0px;width:58.0px;height:3px;background:#000;"></div>
<svg class="i" style="left:1301.5px;top:196.0px" width="12" height="11" viewBox="0 0 12 11"><path d="M12 0L0 5.500 12 11z" fill="#000"/></svg>
<div class="circ" style="left:1366.5px;top:184.5px">7</div>
<div class="b" style="left:1330px;top:455.0px;width:59.5px;height:3px;background:#000;"></div>
<svg class="i" style="left:1386.5px;top:451.0px" width="12" height="11" viewBox="0 0 12 11"><path d="M0 0L12 5.500 0 11z" fill="#000"/></svg>
<div class="circ" style="left:1298px;top:439.5px">8</div>
<div class="b" style="left:45px;top:598px;width:1873px;height:52px;background:#fff;"></div>
<div class="b" style="left:45px;top:650px;width:1873px;height:1px;background:#c4c4ca;"></div>
<div class="t" style="left:90.0px;top:608.5px;font-size:17px;line-height:24px;color:#333;letter-spacing:0.24px;">Карточка работы</div>
<div class="t" style="left:318.0px;top:608.5px;font-size:17px;line-height:24px;color:#333;letter-spacing:0.08px;">Связи работы</div>
<div class="t" style="left:519.0px;top:608.5px;font-size:17px;line-height:24px;color:#333;letter-spacing:0.17px;">Связанные графики</div>
<div class="t" style="left:771.0px;top:608.5px;font-size:17px;line-height:24px;color:#333;letter-spacing:0.30px;">Справочники</div>
<div class="t" style="left:968.3px;top:608.5px;font-size:17px;line-height:24px;color:#1976d2;letter-spacing:0.23px;">Ресурсное планирование</div>
<div class="t" style="left:1264.0px;top:608.5px;font-size:17px;line-height:24px;color:#333;letter-spacing:0.15px;">Чек-листы</div>
<div class="t" style="left:1437.0px;top:608.5px;font-size:17px;line-height:24px;color:#333;letter-spacing:0.43px;">Фото / Документация</div>
<div class="t" style="left:1702.0px;top:608.5px;font-size:17px;line-height:24px;color:#333;letter-spacing:0.20px;">Запросы и поручения</div>
<div class="b" style="left:923px;top:639px;width:296px;height:2px;background:#1976d2;"></div>
<div class="b" style="left:45px;top:693px;width:1873px;height:1px;background:#c4c4ca;"></div>
<div class="b" style="left:295.5px;top:651px;width:44px;height:42px;background:#dfdfe3;"></div>
<svg class="i" style="left:54.5px;top:660.5px;" width="24" height="24" viewBox="0 0 24 24" fill="none" stroke="#4b4b53" stroke-width="1.85" stroke-linecap="round" stroke-linejoin="round"><path d="M1.800 3h18.400c-1 4-5.500 6.500-6 9.500v6.500c0 1-1 1.500-1.800 1.500H10c-.800 0-1.500-.600-1.500-1.500V12.500c-.500-3-5.500-5.500-6.700-9.500z" stroke-width="2.100"/><path d="M18.500 20.500h6l-3 2.800z" fill="#4b4b53" stroke="none"/></svg>
<svg class="i" style="left:108.0px;top:660.5px;" width="24" height="24" viewBox="0 0 24 24" fill="none" stroke="#4b4b53" stroke-width="1.85" stroke-linecap="round" stroke-linejoin="round"><path d="M19.600 1.500L15.300 5.800V8.600H18.100L22.300 4.300A6.600 6.600 0 0 1 13.600 13.600L5.400 22.300A2.600 2.600 0 0 1 1.600 18.800L10.300 10.200A6.600 6.600 0 0 1 19.600 1.500Z" stroke-width="1.900"/><path d="M17.800 21h6.400l-3.200 2.900z" fill="#4b4b53" stroke="none"/></svg>
<svg class="i" style="left:155.6px;top:660.5px;" width="24" height="24" viewBox="0 0 24 24" fill="none" stroke="#4b4b53" stroke-width="1.85" stroke-linecap="round" stroke-linejoin="round"><rect x="2.200" y="3.500" width="19.600" height="19.600" rx="3.500" stroke-width="1.900"/><path d="M2.500 8.300h19M7.300 .800v2.700M16.700 .800v2.700" stroke-width="1.900"/><path d="M7.100 8.500v14.500M12 8.500v14.500M16.900 8.500v14.500" stroke-width="1.900"/></svg>
<svg class="i" style="left:209.0px;top:660.5px;" width="24" height="24" viewBox="0 0 24 24" fill="none" stroke="#4b4b53" stroke-width="1.85" stroke-linecap="round" stroke-linejoin="round"><rect x="2.200" y="3.500" width="19.600" height="19.600" rx="3.500" stroke-width="1.900"/><path d="M2.500 8.300h19M7.300 .800v2.700M16.700 .800v2.700" stroke-width="1.900"/><path d="M7.300 8.500v14.500" stroke-width="1.900"/><path d="M17.300 12v8l-6-4z" fill="#4b4b53" stroke-width="0.800"/></svg>
<svg class="i" style="left:257.0px;top:660.5px;" width="24" height="24" viewBox="0 0 24 24" fill="none" stroke="#4b4b53" stroke-width="1.85" stroke-linecap="round" stroke-linejoin="round"><rect x="2.200" y="3.500" width="19.600" height="19.600" rx="3.500" stroke-width="1.900"/><path d="M2.500 8.300h19M7.300 .800v2.700M16.700 .800v2.700" stroke-width="1.900"/><path d="M7.300 8.500v14.500" stroke-width="1.900"/><path d="M11.500 12v8l6-4z" fill="#4b4b53" stroke-width="0.800"/></svg>
<svg class="i" style="left:305.0px;top:660.5px;" width="24" height="24" viewBox="0 0 24 24" fill="none" stroke="#4b4b53" stroke-width="1.85" stroke-linecap="round" stroke-linejoin="round"><rect x="2.200" y="3.500" width="19.600" height="19.600" rx="3.500" stroke-width="1.900"/><path d="M2.500 8.300h19M7.300 .800v2.700M16.700 .800v2.700" stroke-width="1.900"/><text x="12" y="20" text-anchor="middle" font-family="Liberation Sans, sans-serif" font-weight="bold" font-size="11.500" fill="#4b4b53" stroke="none">S</text></svg>
<svg class="i" style="left:353.0px;top:660.5px;" width="24" height="24" viewBox="0 0 24 24" fill="none" stroke="#4b4b53" stroke-width="1.85" stroke-linecap="round" stroke-linejoin="round"><rect x="2.200" y="3.500" width="19.600" height="19.600" rx="3.500" stroke-width="1.900"/><path d="M2.500 8.300h19M7.300 .800v2.700M16.700 .800v2.700" stroke-width="1.900"/><text x="12" y="20" text-anchor="middle" font-family="Liberation Sans, sans-serif" font-weight="bold" font-size="11.500" fill="#4b4b53" stroke="none">D</text></svg>
<svg class="i" style="left:401.0px;top:660.5px;" width="24" height="24" viewBox="0 0 24 24" fill="none" stroke="#4b4b53" stroke-width="1.85" stroke-linecap="round" stroke-linejoin="round"><rect x="2.200" y="3.500" width="19.600" height="19.600" rx="3.500" stroke-width="1.900"/><path d="M2.500 8.300h19M7.300 .800v2.700M16.700 .800v2.700" stroke-width="1.900"/><text x="12" y="20" text-anchor="middle" font-family="Liberation Sans, sans-serif" font-weight="bold" font-size="11.500" fill="#4b4b53" stroke="none">F</text></svg>
<svg class="i" style="left:454.5px;top:660.5px;" width="24" height="24" viewBox="0 0 24 24" fill="none" stroke="#4b4b53" stroke-width="1.85" stroke-linecap="round" stroke-linejoin="round"><circle cx="12" cy="12" r="11" stroke-width="1.600"/><path d="M5.500 12l3 3 5.500-6M10.500 13.500l1.500 1.500 6-6.500" stroke-width="1.800"/></svg>
<svg class="i" style="left:502.5px;top:660.5px;" width="24" height="24" viewBox="0 0 24 24" fill="none" stroke="#c9c9ce" stroke-width="1.85" stroke-linecap="round" stroke-linejoin="round"><circle cx="12" cy="12" r="11" stroke-width="1.600"/><path d="M7.500 12.500l3 3 6-7" stroke-width="1.800"/></svg>
<svg class="i" style="left:550.5px;top:660.5px;" width="24" height="24" viewBox="0 0 24 24" fill="none" stroke="#c9c9ce" stroke-width="1.85" stroke-linecap="round" stroke-linejoin="round"><circle cx="12" cy="12" r="11" stroke-width="1.600"/><path d="M8 8l8 8M16 8l-8 8" stroke-width="1.800"/></svg>
<div class="b" style="left:93px;top:651px;width:1px;height:42px;background:#b4b4bc;"></div>
<div class="b" style="left:194px;top:651px;width:1px;height:42px;background:#b4b4bc;"></div>
<div class="b" style="left:440px;top:651px;width:1px;height:42px;background:#b4b4bc;"></div>
<div class="b" style="left:45px;top:743px;width:1873px;height:158px;background:#fff;"></div>
<div class="b" style="left:45px;top:718px;width:1873px;height:1px;background:#c4c4ca;"></div>
<div class="b" style="left:45px;top:743px;width:1873px;height:1px;background:#c4c4ca;"></div>
<div class="t" style="left:104.8px;top:724.3px;font-size:11.6px;line-height:16px;color:#222;">Тип</div>
<div class="t" style="left:203.8px;top:724.3px;font-size:11.6px;line-height:16px;color:#222;">Наименование</div>
<div class="t" style="left:350.2px;top:724.3px;font-size:11.6px;line-height:16px;color:#222;">План</div>
<div class="t" style="left:461.6px;top:724.3px;font-size:11.6px;line-height:16px;color:#222;">Факт</div>
<div class="t" style="left:553.1px;top:724.3px;font-size:11.6px;line-height:16px;color:#222;">Остаток</div>
<div class="t" style="left:634.3px;top:724.3px;font-size:11.6px;line-height:16px;color:#222;">Нераспределенн...</div>
<div class="t" style="left:782.4px;top:724.3px;font-size:11.6px;line-height:16px;color:#222;">Долг</div>
<div class="b" style="left:184px;top:718px;width:1px;height:158px;background:#b5b5bb;"></div>
<div class="b" style="left:304px;top:718px;width:1px;height:158px;background:#b5b5bb;"></div>
<div class="b" style="left:424px;top:718px;width:1px;height:158px;background:#b5b5bb;"></div>
<div class="b" style="left:525px;top:718px;width:1px;height:158px;background:#b5b5bb;"></div>
<div class="b" style="left:625px;top:718px;width:1px;height:158px;background:#b5b5bb;"></div>
<div class="b" style="left:745px;top:718px;width:1px;height:158px;background:#b5b5bb;"></div>
<div class="b" style="left:845px;top:718px;width:1px;height:183px;background:#b5b5bb;"></div>
<div class="b" style="left:45px;top:787px;width:800px;height:1px;background:#b5b5bb;"></div>
<div class="b" style="left:45px;top:831px;width:800px;height:1px;background:#b5b5bb;"></div>
<div class="b" style="left:45px;top:875px;width:800px;height:1px;background:#b5b5bb;"></div>
<div class="b" style="left:845px;top:744px;width:1073px;height:131px;background:#c5dbf0;"></div>
<svg class="i" style="left:54.0px;top:757.0px;" width="17" height="17" viewBox="0 0 24 24" fill="none" stroke="#4b4b53" stroke-width="1.6" stroke-linecap="round" stroke-linejoin="round"><circle cx="9" cy="4" r="2.200" fill="#4b4b53" stroke="none"/><path d="M3 21l3-7 3-5 4 2 2 4M9 9l-1 6 3 6M14 8l5 9" stroke-width="1.800"/><path d="M14 22l4-6 5 6z" fill="#4b4b53" stroke-width="1"/></svg>
<div class="t" style="left:80.0px;top:758.3px;font-size:11.7px;line-height:16px;color:#222;">Физобъем</div>
<div class="b" style="left:185px;top:744px;width:119px;height:43px;overflow:hidden;"><div class="t" style="left:10.0px;top:14.3px;font-size:11.7px;line-height:16px;color:#222;">Устройство буронаб</div></div>
<div class="t" style="left:357.7px;top:757.8px;font-size:11.7px;line-height:16px;color:#222;">25</div>
<div class="t" style="left:468.0px;top:757.8px;font-size:11.7px;line-height:16px;color:#222;">25</div>
<div class="t" style="left:571.3px;top:757.8px;font-size:11.7px;line-height:16px;color:#222;">0</div>
<div class="t" style="left:681.5px;top:757.8px;font-size:11.7px;line-height:16px;color:#222;">0</div>
<div class="t" style="left:791.7px;top:757.8px;font-size:11.7px;line-height:16px;color:#222;">0</div>
<div class="t" style="left:879.5px;top:757.5px;font-size:11.7px;line-height:16px;color:#7d8894;">5</div>
<div class="t" style="left:949.5px;top:757.5px;font-size:11.7px;line-height:16px;color:#7d8894;">5</div>
<div class="t" style="left:1019.5px;top:757.5px;font-size:11.7px;line-height:16px;color:#6fcf97;">5</div>
<svg class="i" style="left:985px;top:743px" width="21" height="21" viewBox="0 0 21 21"><path d="M0 0h20.500L0 21z" fill="#6fcf97"/></svg>
<div class="t" style="left:1089.5px;top:757.5px;font-size:11.7px;line-height:16px;color:#7d8894;">6</div>
<div class="t" style="left:1148.2px;top:757.5px;font-size:11.7px;line-height:16px;color:#7d8894;">4 590</div>
<div class="t" style="left:1229.5px;top:757.5px;font-size:11.7px;line-height:16px;color:#7d8894;">5</div>
<div class="t" style="left:1299.5px;top:757.5px;font-size:11.7px;line-height:16px;color:#7d8894;">5</div>
<div class="t" style="left:1369.5px;top:757.5px;font-size:11.7px;line-height:16px;color:#6fcf97;">5</div>
<svg class="i" style="left:1335px;top:743px" width="21" height="21" viewBox="0 0 21 21"><path d="M0 0h20.500L0 21z" fill="#6fcf97"/></svg>
<div class="t" style="left:1439.5px;top:757.5px;font-size:11.7px;line-height:16px;color:#7d8894;">6</div>
<div class="t" style="left:1498.2px;top:757.5px;font-size:11.7px;line-height:16px;color:#7d8894;">4 590</div>
<div class="t" style="left:1579.5px;top:757.5px;font-size:11.7px;line-height:16px;color:#7d8894;">5</div>
<div class="t" style="left:1649.5px;top:757.5px;font-size:11.7px;line-height:16px;color:#7d8894;">5</div>
<div class="t" style="left:1719.5px;top:757.5px;font-size:11.7px;line-height:16px;color:#6fcf97;">5</div>
<svg class="i" style="left:1685px;top:743px" width="21" height="21" viewBox="0 0 21 21"><path d="M0 0h20.500L0 21z" fill="#6fcf97"/></svg>
<div class="t" style="left:1789.5px;top:757.5px;font-size:11.7px;line-height:16px;color:#7d8894;">6</div>
<div class="t" style="left:1848.2px;top:757.5px;font-size:11.7px;line-height:16px;color:#7d8894;">4 590</div>
<div class="t" style="left:1929.5px;top:757.5px;font-size:11.7px;line-height:16px;color:#7d8894;">5</div>
<div class="b" style="left:845px;top:787px;width:1073px;height:1px;background:repeating-linear-gradient(90deg,#a9b4c0 0 3px,transparent 3px 5px);"></div>
<svg class="i" style="left:54.0px;top:801.0px;" width="17" height="17" viewBox="0 0 24 24" fill="none" stroke="#4b4b53" stroke-width="1.6" stroke-linecap="round" stroke-linejoin="round"><path d="M7 8.500a5 5 0 0 1 10 0z" fill="#4b4b53" stroke-width="1"/><path d="M5.500 8.500h13" stroke-width="1.600"/><path d="M8 9.500c0 3 1.500 5 4 5s4-2 4-5" stroke-width="1.600"/><path d="M3 23c0-4 3.500-6 9-6s9 2 9 6" stroke-width="1.600"/></svg>
<div class="t" style="left:80.0px;top:802.3px;font-size:11.7px;line-height:16px;color:#222;">Трудозатраты</div>
<div class="t" style="left:354.4px;top:801.8px;font-size:11.7px;line-height:16px;color:#222;">150</div>
<div class="t" style="left:464.7px;top:801.8px;font-size:11.7px;line-height:16px;color:#222;">150</div>
<div class="t" style="left:571.3px;top:801.8px;font-size:11.7px;line-height:16px;color:#222;">0</div>
<div class="t" style="left:681.5px;top:801.8px;font-size:11.7px;line-height:16px;color:#222;">0</div>
<div class="t" style="left:791.7px;top:801.8px;font-size:11.7px;line-height:16px;color:#222;">0</div>
<div class="t" style="left:876.3px;top:801.5px;font-size:11.7px;line-height:16px;color:#7d8894;">25</div>
<div class="t" style="left:946.3px;top:801.5px;font-size:11.7px;line-height:16px;color:#7d8894;">25</div>
<div class="t" style="left:1016.3px;top:801.5px;font-size:11.7px;line-height:16px;color:#6fcf97;">25</div>
<svg class="i" style="left:985px;top:787px" width="21" height="21" viewBox="0 0 21 21"><path d="M0 0h20.500L0 21z" fill="#6fcf97"/></svg>
<div class="t" style="left:1089.5px;top:801.5px;font-size:11.7px;line-height:16px;color:#7d8894;">6</div>
<div class="t" style="left:1148.2px;top:801.5px;font-size:11.7px;line-height:16px;color:#7d8894;">4 590</div>
<div class="t" style="left:1226.3px;top:801.5px;font-size:11.7px;line-height:16px;color:#7d8894;">25</div>
<div class="t" style="left:1296.3px;top:801.5px;font-size:11.7px;line-height:16px;color:#7d8894;">25</div>
<div class="t" style="left:1366.3px;top:801.5px;font-size:11.7px;line-height:16px;color:#6fcf97;">25</div>
<svg class="i" style="left:1335px;top:787px" width="21" height="21" viewBox="0 0 21 21"><path d="M0 0h20.500L0 21z" fill="#6fcf97"/></svg>
<div class="t" style="left:1439.5px;top:801.5px;font-size:11.7px;line-height:16px;color:#7d8894;">6</div>
<div class="t" style="left:1498.2px;top:801.5px;font-size:11.7px;line-height:16px;color:#7d8894;">4 590</div>
<div class="t" style="left:1576.3px;top:801.5px;font-size:11.7px;line-height:16px;color:#7d8894;">25</div>
<div class="t" style="left:1646.3px;top:801.5px;font-size:11.7px;line-height:16px;color:#7d8894;">25</div>
<div class="t" style="left:1716.3px;top:801.5px;font-size:11.7px;line-height:16px;color:#6fcf97;">25</div>
<svg class="i" style="left:1685px;top:787px" width="21" height="21" viewBox="0 0 21 21"><path d="M0 0h20.500L0 21z" fill="#6fcf97"/></svg>
<div class="t" style="left:1789.5px;top:801.5px;font-size:11.7px;line-height:16px;color:#7d8894;">6</div>
<div class="t" style="left:1848.2px;top:801.5px;font-size:11.7px;line-height:16px;color:#7d8894;">4 590</div>
<div class="t" style="left:1926.3px;top:801.5px;font-size:11.7px;line-height:16px;color:#7d8894;">25</div>
<div class="b" style="left:845px;top:831px;width:1073px;height:1px;background:repeating-linear-gradient(90deg,#a9b4c0 0 3px,transparent 3px 5px);"></div>
<svg class="i" style="left:54.0px;top:845.0px;" width="17" height="17" viewBox="0 0 24 24" fill="none" stroke="#4b4b53" stroke-width="1.6" stroke-linecap="round" stroke-linejoin="round"><ellipse cx="14" cy="5" rx="6.500" ry="2.800" stroke-width="1.500"/><path d="M7.500 5v9M20.500 5v12" stroke-width="1.500"/><path d="M7.500 8c0 1.500 3 2.800 6.500 2.800s6.500-1.300 6.500-2.800M20.500 11c0 1.300-2 2.300-4.500 2.700" stroke-width="1.500"/><ellipse cx="9" cy="15.500" rx="7.500" ry="3" stroke-width="1.500"/><path d="M1.500 15.500V20c0 1.700 3.400 3 7.500 3s7.500-1.300 7.500-3v-4.500M1.500 17.800c0 1.700 3.400 3 7.500 3s7.500-1.300 7.500-3M20.500 14.500c0 1.300-1.500 2.300-4 2.700M20.500 17.500c0 1.300-1.500 2.300-4 2.700" stroke-width="1.500"/></svg>
<div class="t" style="left:80.0px;top:846.3px;font-size:11.7px;line-height:16px;color:#222;">Стоимость</div>
<div class="t" style="left:343.5px;top:845.8px;font-size:11.7px;line-height:16px;color:#222;">114 750</div>
<div class="t" style="left:453.8px;top:845.8px;font-size:11.7px;line-height:16px;color:#222;">114 750</div>
<div class="t" style="left:571.3px;top:845.8px;font-size:11.7px;line-height:16px;color:#222;">0</div>
<div class="t" style="left:681.5px;top:845.8px;font-size:11.7px;line-height:16px;color:#222;">0</div>
<div class="t" style="left:791.7px;top:845.8px;font-size:11.7px;line-height:16px;color:#222;">0</div>
<div class="t" style="left:864.9px;top:845.5px;font-size:11.7px;line-height:16px;color:#7d8894;">19 125</div>
<div class="t" style="left:934.9px;top:845.5px;font-size:11.7px;line-height:16px;color:#7d8894;">19 125</div>
<div class="t" style="left:1004.9px;top:845.5px;font-size:11.7px;line-height:16px;color:#6fcf97;">19 125</div>
<svg class="i" style="left:985px;top:831px" width="21" height="21" viewBox="0 0 21 21"><path d="M0 0h20.500L0 21z" fill="#6fcf97"/></svg>
<div class="t" style="left:1089.5px;top:845.5px;font-size:11.7px;line-height:16px;color:#7d8894;">6</div>
<div class="t" style="left:1148.2px;top:845.5px;font-size:11.7px;line-height:16px;color:#7d8894;">4 590</div>
<div class="t" style="left:1214.9px;top:845.5px;font-size:11.7px;line-height:16px;color:#7d8894;">19 125</div>
<div class="t" style="left:1284.9px;top:845.5px;font-size:11.7px;line-height:16px;color:#7d8894;">19 125</div>
<div class="t" style="left:1354.9px;top:845.5px;font-size:11.7px;line-height:16px;color:#6fcf97;">19 125</div>
<svg class="i" style="left:1335px;top:831px" width="21" height="21" viewBox="0 0 21 21"><path d="M0 0h20.500L0 21z" fill="#6fcf97"/></svg>
<div class="t" style="left:1439.5px;top:845.5px;font-size:11.7px;line-height:16px;color:#7d8894;">6</div>
<div class="t" style="left:1498.2px;top:845.5px;font-size:11.7px;line-height:16px;color:#7d8894;">4 590</div>
<div class="t" style="left:1564.9px;top:845.5px;font-size:11.7px;line-height:16px;color:#7d8894;">19 125</div>
<div class="t" style="left:1634.9px;top:845.5px;font-size:11.7px;line-height:16px;color:#7d8894;">19 125</div>
<div class="t" style="left:1704.9px;top:845.5px;font-size:11.7px;line-height:16px;color:#6fcf97;">19 125</div>
<svg class="i" style="left:1685px;top:831px" width="21" height="21" viewBox="0 0 21 21"><path d="M0 0h20.500L0 21z" fill="#6fcf97"/></svg>
<div class="t" style="left:1789.5px;top:845.5px;font-size:11.7px;line-height:16px;color:#7d8894;">6</div>
<div class="t" style="left:1848.2px;top:845.5px;font-size:11.7px;line-height:16px;color:#7d8894;">4 590</div>
<div class="t" style="left:1914.9px;top:845.5px;font-size:11.7px;line-height:16px;color:#7d8894;">19 125</div>
<div class="b" style="left:845px;top:875px;width:1073px;height:1px;background:repeating-linear-gradient(90deg,#a9b4c0 0 3px,transparent 3px 5px);"></div>
<div class="t" style="left:853.1px;top:724.0px;font-size:11.6px;line-height:16px;color:#222;">Согл.план</div>
<div class="b" style="left:845px;top:718px;width:1px;height:182px;background:#b5b5bb;"></div>
<div class="t" style="left:921.8px;top:724.0px;font-size:11.6px;line-height:16px;color:#222;">Опер.план</div>
<div class="b" style="left:915px;top:718px;width:1px;height:157px;background:repeating-linear-gradient(180deg,#a9b4c0 0 3px,transparent 3px 5px);"></div>
<div class="t" style="left:1007.6px;top:724.0px;font-size:11.6px;line-height:16px;color:#222;">Факт</div>
<div class="b" style="left:985px;top:718px;width:1px;height:157px;background:repeating-linear-gradient(180deg,#a9b4c0 0 3px,transparent 3px 5px);"></div>
<div class="t" style="left:1058.1px;top:724.0px;font-size:11.6px;line-height:16px;color:#222;">Уд. трудоз...</div>
<div class="b" style="left:1055px;top:718px;width:1px;height:157px;background:repeating-linear-gradient(180deg,#a9b4c0 0 3px,transparent 3px 5px);"></div>
<div class="t" style="left:1141.5px;top:724.0px;font-size:11.6px;line-height:16px;color:#222;">Ставка</div>
<div class="b" style="left:1125px;top:718px;width:1px;height:157px;background:repeating-linear-gradient(180deg,#a9b4c0 0 3px,transparent 3px 5px);"></div>
<div class="t" style="left:991.5px;top:698.0px;font-size:11.6px;line-height:16px;color:#222;">17.10.2025</div>
<div class="t" style="left:1203.1px;top:724.0px;font-size:11.6px;line-height:16px;color:#222;">Согл.план</div>
<div class="b" style="left:1195px;top:693px;width:1px;height:182px;background:#b5b5bb;"></div>
<div class="t" style="left:1271.8px;top:724.0px;font-size:11.6px;line-height:16px;color:#222;">Опер.план</div>
<div class="b" style="left:1265px;top:718px;width:1px;height:157px;background:repeating-linear-gradient(180deg,#a9b4c0 0 3px,transparent 3px 5px);"></div>
<div class="t" style="left:1357.6px;top:724.0px;font-size:11.6px;line-height:16px;color:#222;">Факт</div>
<div class="b" style="left:1335px;top:718px;width:1px;height:157px;background:repeating-linear-gradient(180deg,#a9b4c0 0 3px,transparent 3px 5px);"></div>
<div class="t" style="left:1408.1px;top:724.0px;font-size:11.6px;line-height:16px;color:#222;">Уд. трудоз...</div>
<div class="b" style="left:1405px;top:718px;width:1px;height:157px;background:repeating-linear-gradient(180deg,#a9b4c0 0 3px,transparent 3px 5px);"></div>
<div class="t" style="left:1491.5px;top:724.0px;font-size:11.6px;line-height:16px;color:#222;">Ставка</div>
<div class="b" style="left:1475px;top:718px;width:1px;height:157px;background:repeating-linear-gradient(180deg,#a9b4c0 0 3px,transparent 3px 5px);"></div>
<div class="t" style="left:1341.5px;top:698.0px;font-size:11.6px;line-height:16px;color:#222;">18.10.2025</div>
<div class="t" style="left:1553.1px;top:724.0px;font-size:11.6px;line-height:16px;color:#222;">Согл.план</div>
<div class="b" style="left:1545px;top:693px;width:1px;height:182px;background:#b5b5bb;"></div>
<div class="t" style="left:1621.8px;top:724.0px;font-size:11.6px;line-height:16px;color:#222;">Опер.план</div>
<div class="b" style="left:1615px;top:718px;width:1px;height:157px;background:repeating-linear-gradient(180deg,#a9b4c0 0 3px,transparent 3px 5px);"></div>
<div class="t" style="left:1707.6px;top:724.0px;font-size:11.6px;line-height:16px;color:#222;">Факт</div>
<div class="b" style="left:1685px;top:718px;width:1px;height:157px;background:repeating-linear-gradient(180deg,#a9b4c0 0 3px,transparent 3px 5px);"></div>
<div class="t" style="left:1758.1px;top:724.0px;font-size:11.6px;line-height:16px;color:#222;">Уд. трудоз...</div>
<div class="b" style="left:1755px;top:718px;width:1px;height:157px;background:repeating-linear-gradient(180deg,#a9b4c0 0 3px,transparent 3px 5px);"></div>
<div class="t" style="left:1841.5px;top:724.0px;font-size:11.6px;line-height:16px;color:#222;">Ставка</div>
<div class="b" style="left:1825px;top:718px;width:1px;height:157px;background:repeating-linear-gradient(180deg,#a9b4c0 0 3px,transparent 3px 5px);"></div>
<div class="t" style="left:1691.5px;top:698.0px;font-size:11.6px;line-height:16px;color:#222;">19.10.2025</div>
<div class="t" style="left:1903.1px;top:724.0px;font-size:11.6px;line-height:16px;color:#222;">Согл.план</div>
<div class="b" style="left:1895px;top:693px;width:1px;height:182px;background:#b5b5bb;"></div>
<div class="b" style="left:45px;top:901px;width:1873px;height:11px;background:#f2f2f4;"></div>
<div class="b" style="left:296px;top:902px;width:35px;height:10px;background:#dadadd;border-radius:5px;"></div>
</body></html>
